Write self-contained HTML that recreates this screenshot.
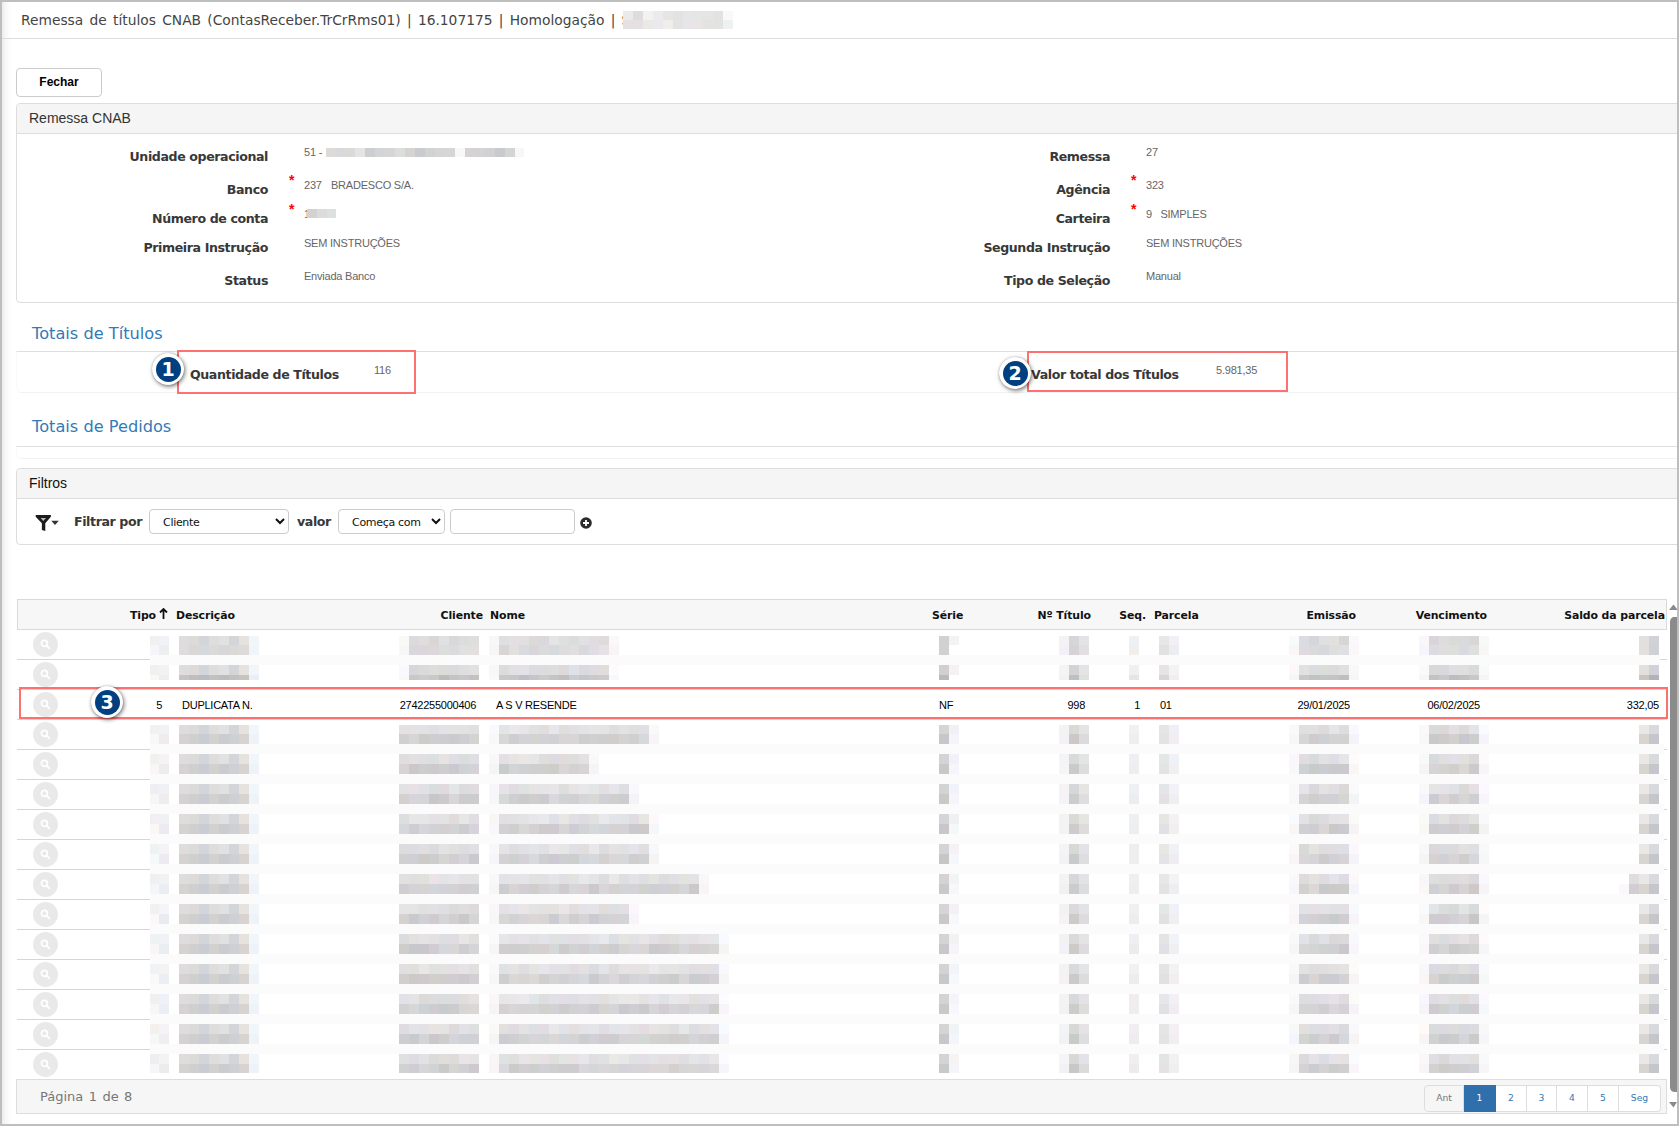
<!DOCTYPE html><html lang="pt-BR"><head><meta charset="utf-8"><title>Remessa de títulos CNAB</title><style>
*{box-sizing:border-box;}
html,body{margin:0;padding:0;}
body{width:1679px;height:1126px;overflow:hidden;background:#fff;position:relative;font-family:"Liberation Sans",sans-serif;color:#333;}
.abs{position:absolute;white-space:nowrap;}
.v{font-family:"DejaVu Sans","Liberation Sans",sans-serif;}
.a{font-family:"Liberation Sans",sans-serif;}
#frame{position:absolute;left:0;top:0;width:1679px;height:1126px;border:2px solid #bebebe;z-index:50;pointer-events:none;}
#lshade{position:absolute;left:2px;top:2px;width:9px;height:1122px;background:linear-gradient(90deg,#ececec 0,#f6f6f6 3px,#fff 9px);z-index:0;}
#titlebar{position:absolute;left:0;top:2px;width:1679px;height:37px;border-bottom:1px solid #dcdcdc;}
#title{position:absolute;left:21px;top:8px;height:20px;line-height:20px;font-size:13.8px;word-spacing:1.9px;color:#444;white-space:nowrap;}
.btn{position:absolute;left:16px;top:68px;width:86px;height:29px;border:1px solid #ccc;border-radius:4px;background:#fff;font:bold 12px "Liberation Sans",sans-serif;color:#000;text-align:center;line-height:24px;padding:0 0 2px 0;}
.panel{position:absolute;left:16px;width:1700px;border:1px solid #ddd;border-radius:4px;background:#fff;}
.panel .hd{height:30px;background:#f5f5f5;border-bottom:1px solid #ddd;border-radius:3px 3px 0 0;font-size:14px;line-height:28px;padding-left:12px;color:#333;text-indent:0;}
.lbl{position:absolute;white-space:nowrap;font-family:"DejaVu Sans","Liberation Sans",sans-serif;font-weight:bold;font-size:12.6px;letter-spacing:-0.4px;color:#383838;text-align:right;height:18px;line-height:18px;}
.val{position:absolute;white-space:nowrap;font-size:11px;letter-spacing:-0.22px;color:#666;height:14px;line-height:14px;}
.req{position:absolute;color:#f00;font:bold 14px "Liberation Sans",sans-serif;height:14px;line-height:14px;}
.sect{position:absolute;left:32px;font-family:"DejaVu Sans","Liberation Sans",sans-serif;font-size:16.2px;color:#337ab7;height:22px;line-height:22px;white-space:nowrap;}
.fs{position:absolute;left:16px;width:1700px;border-top:1px solid #dfdfdf;border-bottom:1px solid #f2f2f2;border-left:1px solid #fafafa;border-radius:0 0 0 5px;}
.redbox{position:absolute;border:2px solid #fd7171;z-index:5;}
.badge{position:absolute;width:32px;height:32px;border-radius:50%;background:#fff;box-shadow:1px 1.5px 4px rgba(0,0,0,.55),0 0 1px rgba(0,0,0,.35);z-index:6;}
.badge b{position:absolute;left:3.5px;top:3.5px;width:25px;height:25px;border-radius:50%;background:#004080;color:#fff;font:bold 19px "DejaVu Sans",sans-serif;line-height:25px;text-align:center;}
.sel{position:absolute;height:25px;-webkit-appearance:none;appearance:none;outline:none;margin:0;border:1px solid #ccc;border-radius:4px;background:#fff;font-family:"DejaVu Sans","Liberation Sans",sans-serif;font-size:11px;letter-spacing:-0.3px;color:#111;line-height:25px;white-space:nowrap;}
.th{position:absolute;top:1px;height:29px;line-height:29px;font-family:"DejaVu Sans","Liberation Sans",sans-serif;font-weight:bold;font-size:10.9px;letter-spacing:-0.1px;color:#111;white-space:nowrap;}
.td{position:absolute;font-size:11px;letter-spacing:-0.25px;color:#000;height:14px;line-height:14px;white-space:nowrap;}
.rowline{position:absolute;left:17px;width:1650px;height:1px;background:#d6d6d6;}
.mag{position:absolute;left:33px;width:25px;height:25px;border-radius:50%;background:#e9e9e9;}
.mag svg{position:absolute;left:7px;top:7px;}
.pg{position:absolute;top:0;height:27px;line-height:23px;border:1px solid #ddd;border-left:none;text-align:center;font-family:"DejaVu Sans","Liberation Sans",sans-serif;font-size:9.2px;color:#337ab7;background:#fff;}
</style></head><body>
<div id="lshade"></div>
<div id="titlebar"><div id="title" class="v">Remessa de títulos CNAB (ContasReceber.TrCrRms01) | 16.107175 | Homologação | S</div></div>
<button class="btn" type="button">Fechar</button>
<div class="panel" style="top:103px;height:200px;"><div class="hd">Remessa CNAB</div></div>
<div class="lbl" style="left:-32px;width:300px;top:148px;">Unidade operacional</div>
<div class="val" style="left:304px;top:145px;">51 - </div>
<div class="lbl" style="left:-32px;width:300px;top:181px;">Banco</div>
<div class="val" style="left:304px;top:178px;">237 &nbsp;<span style="margin-left:0.8px"> BRADESCO S/A.</span></div>
<div class="lbl" style="left:-32px;width:300px;top:210px;">Número de conta</div>
<div class="val" style="left:304px;top:207px;">1</div>
<div class="lbl" style="left:-32px;width:300px;top:239px;">Primeira Instrução</div>
<div class="val" style="left:304px;top:236px;">SEM INSTRUÇÕES</div>
<div class="lbl" style="left:-32px;width:300px;top:272px;">Status</div>
<div class="val" style="left:304px;top:269px;">Enviada Banco</div>
<div class="lbl" style="left:810px;width:300px;top:148px;">Remessa</div>
<div class="val" style="left:1146px;top:145px;">27</div>
<div class="lbl" style="left:810px;width:300px;top:181px;">Agência</div>
<div class="val" style="left:1146px;top:178px;">323</div>
<div class="lbl" style="left:810px;width:300px;top:210px;">Carteira</div>
<div class="val" style="left:1146px;top:207px;">9 &nbsp; SIMPLES</div>
<div class="lbl" style="left:810px;width:300px;top:239px;">Segunda Instrução</div>
<div class="val" style="left:1146px;top:236px;">SEM INSTRUÇÕES</div>
<div class="lbl" style="left:810px;width:300px;top:272px;">Tipo de Seleção</div>
<div class="val" style="left:1146px;top:269px;">Manual</div>
<div class="req" style="left:289px;top:173px;">*</div>
<div class="req" style="left:289px;top:202px;">*</div>
<div class="req" style="left:1131px;top:173px;">*</div>
<div class="req" style="left:1131px;top:202px;">*</div>
<div class="sect" style="top:323px;">Totais de Títulos</div>
<div class="fs" style="top:351px;height:42px;"></div>
<div class="lbl" style="left:190px;top:366px;text-align:left;">Quantidade de Títulos</div>
<div class="val" style="left:374px;top:363px;">116</div>
<div class="lbl" style="left:1031px;top:366px;text-align:left;">Valor total dos Títulos</div>
<div class="val" style="left:1216px;top:363px;">5.981,35</div>
<div class="redbox" style="left:177px;top:350px;width:239px;height:44px;"></div>
<div class="redbox" style="left:1027px;top:351px;width:261px;height:41px;"></div>
<div class="badge" style="left:152px;top:353px;"><b>1</b></div>
<div class="badge" style="left:999px;top:357px;"><b>2</b></div>
<div class="sect" style="top:416px;">Totais de Pedidos</div>
<div class="fs" style="top:446px;height:13px;"></div>
<div class="panel" style="top:468px;height:77px;"><div class="hd" style="color:#111;">Filtros</div></div>
<svg class="abs" style="left:35px;top:514px;" width="26" height="18" viewBox="0 0 26 18"><path d="M0.7 1.1H15.9V2.8L10.3 9.2V17L6.9 16V9.2L0.7 2.8Z" fill="#1c1c1c"/><path d="M5.6 4.1H11L8.3 7Z" fill="#b9b9b9"/><path d="M16.3 6.8H23.8L20 10.9Z" fill="#333"/></svg>
<div class="lbl" style="left:74px;top:513px;text-align:left;">Filtrar por</div>
<select class="sel" style="left:149px;top:509px;width:140px;padding:0 0 0 13px;"><option selected>Cliente</option><option>Nome</option><option>Nº Título</option></select>
<svg class="abs" style="left:275px;top:518px;" width="10" height="7" viewBox="0 0 10 7"><path d="M1 1l4 4 4-4" fill="none" stroke="#111" stroke-width="2"/></svg>
<div class="lbl" style="left:297px;top:513px;text-align:left;">valor</div>
<select class="sel" style="left:338px;top:509px;width:107px;padding:0 0 0 13px;"><option selected>Começa com</option><option>Contém</option><option>Igual a</option></select>
<svg class="abs" style="left:431px;top:518px;" width="10" height="7" viewBox="0 0 10 7"><path d="M1 1l4 4 4-4" fill="none" stroke="#111" stroke-width="2"/></svg>
<input class="sel" type="text" style="left:450px;top:509px;width:125px;" value="">
<svg class="abs" style="left:580px;top:517px;" width="12" height="12" viewBox="0 0 12 12"><circle cx="6" cy="6" r="5.8" fill="#2b2b2b"/><path d="M6 3v6M3 6h6" stroke="#fff" stroke-width="1.8"/></svg>
<div class="abs" role="row" style="left:17px;top:599px;width:1650px;height:31px;background:#f7f7f7;border:1px solid #d9d9d9;">
<div class="th" role="columnheader" style="right:1510px;">Tipo</div>
<svg class="abs" style="left:141px;top:8px;" width="9" height="12" viewBox="0 0 9 12"><path d="M4.5 1v10M1 4.5L4.5 1 8 4.5" fill="none" stroke="#111" stroke-width="1.8"/></svg>
<div class="th" role="columnheader" style="left:158px;">Descrição</div>
<div class="th" role="columnheader" style="right:1183px;">Cliente</div>
<div class="th" role="columnheader" style="left:472px;">Nome</div>
<div class="th" role="columnheader" style="left:914px;">Série</div>
<div class="th" role="columnheader" style="right:575px;">Nº Título</div>
<div class="th" role="columnheader" style="right:520px;">Seq.</div>
<div class="th" role="columnheader" style="left:1136px;">Parcela</div>
<div class="th" role="columnheader" style="right:310px;">Emissão</div>
<div class="th" role="columnheader" style="right:179px;">Vencimento</div>
<div class="th" role="columnheader" style="right:1px;">Saldo da parcela</div>
</div>
<div class="mag" style="top:632px;"><svg width="11" height="11" viewBox="0 0 11 11"><circle cx="4.4" cy="4.4" r="3" fill="none" stroke="#fff" stroke-width="1.7"/><path d="M6.7 6.7l2.7 2.7" stroke="#fff" stroke-width="1.9" stroke-linecap="round"/></svg></div>
<div class="rowline" style="top:659px;"></div>
<div class="mag" style="top:662px;"><svg width="11" height="11" viewBox="0 0 11 11"><circle cx="4.4" cy="4.4" r="3" fill="none" stroke="#fff" stroke-width="1.7"/><path d="M6.7 6.7l2.7 2.7" stroke="#fff" stroke-width="1.9" stroke-linecap="round"/></svg></div>
<div class="rowline" style="top:689px;"></div>
<div class="mag" style="top:692px;"><svg width="11" height="11" viewBox="0 0 11 11"><circle cx="4.4" cy="4.4" r="3" fill="none" stroke="#fff" stroke-width="1.7"/><path d="M6.7 6.7l2.7 2.7" stroke="#fff" stroke-width="1.9" stroke-linecap="round"/></svg></div>
<div class="rowline" style="top:719px;"></div>
<div class="mag" style="top:722px;"><svg width="11" height="11" viewBox="0 0 11 11"><circle cx="4.4" cy="4.4" r="3" fill="none" stroke="#fff" stroke-width="1.7"/><path d="M6.7 6.7l2.7 2.7" stroke="#fff" stroke-width="1.9" stroke-linecap="round"/></svg></div>
<div class="rowline" style="top:749px;"></div>
<div class="mag" style="top:752px;"><svg width="11" height="11" viewBox="0 0 11 11"><circle cx="4.4" cy="4.4" r="3" fill="none" stroke="#fff" stroke-width="1.7"/><path d="M6.7 6.7l2.7 2.7" stroke="#fff" stroke-width="1.9" stroke-linecap="round"/></svg></div>
<div class="rowline" style="top:779px;"></div>
<div class="mag" style="top:782px;"><svg width="11" height="11" viewBox="0 0 11 11"><circle cx="4.4" cy="4.4" r="3" fill="none" stroke="#fff" stroke-width="1.7"/><path d="M6.7 6.7l2.7 2.7" stroke="#fff" stroke-width="1.9" stroke-linecap="round"/></svg></div>
<div class="rowline" style="top:809px;"></div>
<div class="mag" style="top:812px;"><svg width="11" height="11" viewBox="0 0 11 11"><circle cx="4.4" cy="4.4" r="3" fill="none" stroke="#fff" stroke-width="1.7"/><path d="M6.7 6.7l2.7 2.7" stroke="#fff" stroke-width="1.9" stroke-linecap="round"/></svg></div>
<div class="rowline" style="top:839px;"></div>
<div class="mag" style="top:842px;"><svg width="11" height="11" viewBox="0 0 11 11"><circle cx="4.4" cy="4.4" r="3" fill="none" stroke="#fff" stroke-width="1.7"/><path d="M6.7 6.7l2.7 2.7" stroke="#fff" stroke-width="1.9" stroke-linecap="round"/></svg></div>
<div class="rowline" style="top:869px;"></div>
<div class="mag" style="top:872px;"><svg width="11" height="11" viewBox="0 0 11 11"><circle cx="4.4" cy="4.4" r="3" fill="none" stroke="#fff" stroke-width="1.7"/><path d="M6.7 6.7l2.7 2.7" stroke="#fff" stroke-width="1.9" stroke-linecap="round"/></svg></div>
<div class="rowline" style="top:899px;"></div>
<div class="mag" style="top:902px;"><svg width="11" height="11" viewBox="0 0 11 11"><circle cx="4.4" cy="4.4" r="3" fill="none" stroke="#fff" stroke-width="1.7"/><path d="M6.7 6.7l2.7 2.7" stroke="#fff" stroke-width="1.9" stroke-linecap="round"/></svg></div>
<div class="rowline" style="top:929px;"></div>
<div class="mag" style="top:932px;"><svg width="11" height="11" viewBox="0 0 11 11"><circle cx="4.4" cy="4.4" r="3" fill="none" stroke="#fff" stroke-width="1.7"/><path d="M6.7 6.7l2.7 2.7" stroke="#fff" stroke-width="1.9" stroke-linecap="round"/></svg></div>
<div class="rowline" style="top:959px;"></div>
<div class="mag" style="top:962px;"><svg width="11" height="11" viewBox="0 0 11 11"><circle cx="4.4" cy="4.4" r="3" fill="none" stroke="#fff" stroke-width="1.7"/><path d="M6.7 6.7l2.7 2.7" stroke="#fff" stroke-width="1.9" stroke-linecap="round"/></svg></div>
<div class="rowline" style="top:989px;"></div>
<div class="mag" style="top:992px;"><svg width="11" height="11" viewBox="0 0 11 11"><circle cx="4.4" cy="4.4" r="3" fill="none" stroke="#fff" stroke-width="1.7"/><path d="M6.7 6.7l2.7 2.7" stroke="#fff" stroke-width="1.9" stroke-linecap="round"/></svg></div>
<div class="rowline" style="top:1019px;"></div>
<div class="mag" style="top:1022px;"><svg width="11" height="11" viewBox="0 0 11 11"><circle cx="4.4" cy="4.4" r="3" fill="none" stroke="#fff" stroke-width="1.7"/><path d="M6.7 6.7l2.7 2.7" stroke="#fff" stroke-width="1.9" stroke-linecap="round"/></svg></div>
<div class="rowline" style="top:1049px;"></div>
<div class="mag" style="top:1052px;"><svg width="11" height="11" viewBox="0 0 11 11"><circle cx="4.4" cy="4.4" r="3" fill="none" stroke="#fff" stroke-width="1.7"/><path d="M6.7 6.7l2.7 2.7" stroke="#fff" stroke-width="1.9" stroke-linecap="round"/></svg></div>
<div class="abs" style="left:150px;top:636px;width:1510px;height:44px;background:#fff;"></div>
<div class="abs" style="left:150px;top:724px;width:1514px;height:350px;background:#fff;"></div>
<div class="abs" style="left:150px;top:655px;width:1510px;height:10px;background:#fbfbfb;"></div>
<div class="abs" style="left:150px;top:744px;width:1514px;height:10px;background:#fbfbfb;"></div>
<div class="abs" style="left:150px;top:774px;width:1514px;height:10px;background:#fbfbfb;"></div>
<div class="abs" style="left:150px;top:804px;width:1514px;height:10px;background:#fbfbfb;"></div>
<div class="abs" style="left:150px;top:834px;width:1514px;height:10px;background:#fbfbfb;"></div>
<div class="abs" style="left:150px;top:864px;width:1514px;height:10px;background:#fbfbfb;"></div>
<div class="abs" style="left:150px;top:894px;width:1514px;height:10px;background:#fbfbfb;"></div>
<div class="abs" style="left:150px;top:924px;width:1514px;height:10px;background:#fbfbfb;"></div>
<div class="abs" style="left:150px;top:954px;width:1514px;height:10px;background:#fbfbfb;"></div>
<div class="abs" style="left:150px;top:984px;width:1514px;height:10px;background:#fbfbfb;"></div>
<div class="abs" style="left:150px;top:1014px;width:1514px;height:10px;background:#fbfbfb;"></div>
<div class="abs" style="left:150px;top:1044px;width:1514px;height:10px;background:#fbfbfb;"></div>
<div class="td" role="cell" style="right:1517px;top:698px;">5</div>
<div class="td" role="cell" style="left:182px;top:698px;">DUPLICATA N.</div>
<div class="td" role="cell" style="right:1203px;top:698px;">2742255000406</div>
<div class="td" role="cell" style="left:496px;top:698px;">A S V RESENDE</div>
<div class="td" role="cell" style="left:939px;top:698px;">NF</div>
<div class="td" role="cell" style="right:594px;top:698px;">998</div>
<div class="td" role="cell" style="right:539px;top:698px;">1</div>
<div class="td" role="cell" style="left:1160px;top:698px;">01</div>
<div class="td" role="cell" style="right:329px;top:698px;">29/01/2025</div>
<div class="td" role="cell" style="right:199px;top:698px;">06/02/2025</div>
<div class="td" role="cell" style="right:20px;top:698px;">332,05</div>
<div class="redbox" style="left:19px;top:687px;width:1649px;height:32px;"></div>
<div class="badge" style="left:91px;top:686px;"><b>3</b></div>
<div class="abs" style="left:16px;top:1079px;width:1651px;height:35px;background:#f6f6f6;border:1px solid #ddd;"></div>
<div class="abs v" style="left:40px;top:1088px;font-size:13px;word-spacing:1.3px;color:#777;height:18px;line-height:18px;">Página 1 de 8</div>
<div class="abs" style="left:1424px;top:1085px;width:237px;height:27px;">
<div class="pg" style="left:0px;width:40px;border-left:1px solid #ddd;border-radius:4px 0 0 4px;color:#777;background:#f6f6f6;">Ant</div>
<div class="pg" style="left:40px;width:32px;background:#2f6fab;border-color:#2f6fab;color:#fff;">1</div>
<div class="pg" style="left:72px;width:31px;">2</div>
<div class="pg" style="left:103px;width:30px;">3</div>
<div class="pg" style="left:133px;width:31px;">4</div>
<div class="pg" style="left:164px;width:31px;">5</div>
<div class="pg" style="left:195px;width:42px;border-radius:0 4px 4px 0;">Seg</div>
</div>
<div class="abs" style="left:1668px;top:599px;width:9px;height:520px;background:#fff;"></div>
<svg class="abs" style="left:1669px;top:604px;" width="8" height="6" viewBox="0 0 8 6"><path d="M0 6L4.5 0.5 8 5V6z" fill="#8a8a8a"/></svg>
<div class="abs" style="left:1670px;top:617px;width:7px;height:475px;background:#8b8b8b;border-radius:4px 0 0 4px / 5px 0 0 5px;"></div>
<svg class="abs" style="left:1669px;top:1102px;" width="8" height="6" viewBox="0 0 8 6"><path d="M0 0h8L4.5 5.5z" fill="#8a8a8a"/></svg>
<svg class="abs" style="left:0;top:0;z-index:2;" width="1679" height="1126" viewBox="0 0 1679 1126" shape-rendering="crispEdges"><rect x="623" y="11" width="10" height="9" fill="#eae9eb"/><rect x="623" y="20" width="10" height="9" fill="#e6e1e1"/><rect x="633" y="11" width="10" height="9" fill="#e0dcde"/><rect x="633" y="20" width="10" height="9" fill="#e4e0e4"/><rect x="643" y="11" width="10" height="9" fill="#f3f2f2"/><rect x="643" y="20" width="10" height="9" fill="#e9e9e6"/><rect x="653" y="11" width="10" height="9" fill="#ebeaee"/><rect x="653" y="20" width="10" height="9" fill="#ebe8ee"/><rect x="663" y="11" width="10" height="9" fill="#e8e4e5"/><rect x="663" y="20" width="10" height="9" fill="#efeeea"/><rect x="673" y="11" width="10" height="9" fill="#e2e2e1"/><rect x="673" y="20" width="10" height="9" fill="#e2e3e2"/><rect x="683" y="11" width="10" height="9" fill="#e8e5e6"/><rect x="683" y="20" width="10" height="9" fill="#e7e5e8"/><rect x="693" y="11" width="10" height="9" fill="#e2e6e4"/><rect x="693" y="20" width="10" height="9" fill="#e8e5e4"/><rect x="703" y="11" width="10" height="9" fill="#e5e5e6"/><rect x="703" y="20" width="10" height="9" fill="#e3e4e2"/><rect x="713" y="11" width="10" height="9" fill="#e4e0e4"/><rect x="713" y="20" width="10" height="9" fill="#e1e5e2"/><rect x="723" y="11" width="10" height="9" fill="#f8f9f8"/><rect x="723" y="20" width="10" height="9" fill="#eff0f1"/><rect x="326" y="148" width="9" height="9" fill="#dcdbda"/><rect x="335" y="148" width="10" height="9" fill="#d9d9dc"/><rect x="345" y="148" width="10" height="9" fill="#dcd9d9"/><rect x="355" y="148" width="10" height="9" fill="#e4e4e4"/><rect x="365" y="148" width="10" height="9" fill="#cdced1"/><rect x="375" y="148" width="10" height="9" fill="#d3d4d6"/><rect x="385" y="148" width="10" height="9" fill="#d6d6d7"/><rect x="395" y="148" width="10" height="9" fill="#dcdedd"/><rect x="405" y="148" width="10" height="9" fill="#d6d4d2"/><rect x="415" y="148" width="10" height="9" fill="#cacbcf"/><rect x="425" y="148" width="10" height="9" fill="#d3d2d2"/><rect x="435" y="148" width="10" height="9" fill="#d6d5d5"/><rect x="445" y="148" width="10" height="9" fill="#d5d6d8"/><rect x="455" y="148" width="10" height="9" fill="#f8f8f8"/><rect x="465" y="148" width="10" height="9" fill="#d6d4d3"/><rect x="475" y="148" width="10" height="9" fill="#d3d3d6"/><rect x="485" y="148" width="10" height="9" fill="#d1d1d3"/><rect x="495" y="148" width="10" height="9" fill="#c9cace"/><rect x="505" y="148" width="10" height="9" fill="#d5d4d5"/><rect x="515" y="148" width="9" height="9" fill="#f6f7f9"/><rect x="307" y="209" width="10" height="9" fill="#d2d2d3"/><rect x="317" y="209" width="10" height="9" fill="#dddadb"/><rect x="327" y="209" width="9" height="9" fill="#dbe0e1"/><rect x="150" y="636" width="9" height="9" fill="#f1f0f0"/><rect x="159" y="636" width="10" height="9" fill="#f1f1f8"/><rect x="150" y="645" width="9" height="10" fill="#f6f5f9"/><rect x="159" y="645" width="10" height="10" fill="#eceef0"/><rect x="179" y="636" width="10" height="9" fill="#dedcdc"/><rect x="179" y="645" width="10" height="10" fill="#dedcdc"/><rect x="189" y="636" width="10" height="9" fill="#dddbda"/><rect x="189" y="645" width="10" height="10" fill="#dad8d7"/><rect x="199" y="636" width="10" height="9" fill="#d2d5da"/><rect x="199" y="645" width="10" height="10" fill="#d6d9dc"/><rect x="209" y="636" width="10" height="9" fill="#dedddb"/><rect x="209" y="645" width="10" height="10" fill="#dadada"/><rect x="219" y="636" width="10" height="9" fill="#e0e2e2"/><rect x="219" y="645" width="10" height="10" fill="#d7d7d9"/><rect x="229" y="636" width="10" height="9" fill="#d3d5d9"/><rect x="229" y="645" width="10" height="10" fill="#dbd9d8"/><rect x="239" y="636" width="10" height="9" fill="#e6e2de"/><rect x="239" y="645" width="10" height="10" fill="#dedada"/><rect x="249" y="636" width="10" height="9" fill="#f1f6fb"/><rect x="249" y="645" width="10" height="10" fill="#f0f5fa"/><rect x="399" y="636" width="10" height="9" fill="#f8faf6"/><rect x="399" y="645" width="10" height="10" fill="#f8f7f8"/><rect x="409" y="636" width="10" height="9" fill="#dddadf"/><rect x="409" y="645" width="10" height="10" fill="#d7d7dc"/><rect x="419" y="636" width="10" height="9" fill="#dededd"/><rect x="419" y="645" width="10" height="10" fill="#dbd6dc"/><rect x="429" y="636" width="10" height="9" fill="#dbd6d6"/><rect x="429" y="645" width="10" height="10" fill="#dcd7da"/><rect x="439" y="636" width="10" height="9" fill="#e0e1e3"/><rect x="439" y="645" width="10" height="10" fill="#dbdedd"/><rect x="449" y="636" width="10" height="9" fill="#dad7db"/><rect x="449" y="645" width="10" height="10" fill="#dbdbdd"/><rect x="459" y="636" width="10" height="9" fill="#dbdcde"/><rect x="459" y="645" width="10" height="10" fill="#e2e0df"/><rect x="469" y="636" width="10" height="9" fill="#dfdedd"/><rect x="469" y="645" width="10" height="10" fill="#e3dfdf"/><rect x="489" y="636" width="10" height="9" fill="#f7f7f9"/><rect x="489" y="645" width="10" height="10" fill="#f8f5f6"/><rect x="499" y="636" width="10" height="9" fill="#dedfe0"/><rect x="499" y="645" width="10" height="10" fill="#d9d5d4"/><rect x="509" y="636" width="10" height="9" fill="#e6dfe2"/><rect x="509" y="645" width="10" height="10" fill="#e2dfdf"/><rect x="519" y="636" width="10" height="9" fill="#e0e0e0"/><rect x="519" y="645" width="10" height="10" fill="#d9dadf"/><rect x="529" y="636" width="10" height="9" fill="#ddd9d9"/><rect x="529" y="645" width="10" height="10" fill="#d8d5db"/><rect x="539" y="636" width="10" height="9" fill="#dad8de"/><rect x="539" y="645" width="10" height="10" fill="#dcdbdc"/><rect x="549" y="636" width="10" height="9" fill="#e5e3e4"/><rect x="549" y="645" width="10" height="10" fill="#d7dadd"/><rect x="559" y="636" width="10" height="9" fill="#dedfde"/><rect x="559" y="645" width="10" height="10" fill="#dedcdd"/><rect x="569" y="636" width="10" height="9" fill="#daddde"/><rect x="569" y="645" width="10" height="10" fill="#e0dfde"/><rect x="579" y="636" width="10" height="9" fill="#e1e1e3"/><rect x="579" y="645" width="10" height="10" fill="#d8d9dd"/><rect x="589" y="636" width="10" height="9" fill="#e0dcdf"/><rect x="589" y="645" width="10" height="10" fill="#dfdce4"/><rect x="599" y="636" width="10" height="9" fill="#dfdbdb"/><rect x="599" y="645" width="10" height="10" fill="#e5e2e5"/><rect x="609" y="636" width="10" height="9" fill="#faf9f8"/><rect x="609" y="645" width="10" height="10" fill="#f9f5f6"/><rect x="939" y="636" width="10" height="9" fill="#d3d0d0"/><rect x="939" y="645" width="10" height="10" fill="#d0d1d0"/><rect x="949" y="636" width="10" height="9" fill="#f1f3f4"/><rect x="1059" y="636" width="10" height="9" fill="#f3f2f4"/><rect x="1069" y="636" width="10" height="9" fill="#d6d6d8"/><rect x="1079" y="636" width="10" height="9" fill="#e2e5e7"/><rect x="1059" y="645" width="10" height="10" fill="#f3f1f7"/><rect x="1069" y="645" width="10" height="10" fill="#d7d2d5"/><rect x="1079" y="645" width="10" height="10" fill="#e3dfe1"/><rect x="1129" y="636" width="10" height="9" fill="#eef0f3"/><rect x="1129" y="645" width="10" height="10" fill="#f1eeec"/><rect x="1159" y="636" width="10" height="9" fill="#e8e6e6"/><rect x="1169" y="636" width="10" height="9" fill="#f2eff7"/><rect x="1159" y="645" width="10" height="10" fill="#e1e1e1"/><rect x="1169" y="645" width="10" height="10" fill="#ecedf0"/><rect x="1289" y="636" width="10" height="9" fill="#f9fafc"/><rect x="1289" y="645" width="10" height="10" fill="#f9f6f5"/><rect x="1299" y="636" width="10" height="9" fill="#dbdbe4"/><rect x="1299" y="645" width="10" height="10" fill="#e0d9dd"/><rect x="1309" y="636" width="10" height="9" fill="#d6d5da"/><rect x="1309" y="645" width="10" height="10" fill="#d9dbdb"/><rect x="1319" y="636" width="10" height="9" fill="#e0dfe2"/><rect x="1319" y="645" width="10" height="10" fill="#d6d8dc"/><rect x="1329" y="636" width="10" height="9" fill="#e2e1de"/><rect x="1329" y="645" width="10" height="10" fill="#dddede"/><rect x="1339" y="636" width="10" height="9" fill="#d4d7d3"/><rect x="1339" y="645" width="10" height="10" fill="#dfdfe4"/><rect x="1349" y="636" width="10" height="9" fill="#fbf7fc"/><rect x="1349" y="645" width="10" height="10" fill="#f9f7f7"/><rect x="1419" y="636" width="10" height="9" fill="#faf6fa"/><rect x="1419" y="645" width="10" height="10" fill="#f6f4fd"/><rect x="1429" y="636" width="10" height="9" fill="#d8d4da"/><rect x="1429" y="645" width="10" height="10" fill="#dcdbe0"/><rect x="1439" y="636" width="10" height="9" fill="#deddde"/><rect x="1439" y="645" width="10" height="10" fill="#e0ddde"/><rect x="1449" y="636" width="10" height="9" fill="#dadad7"/><rect x="1449" y="645" width="10" height="10" fill="#dddfdc"/><rect x="1459" y="636" width="10" height="9" fill="#d9dadc"/><rect x="1459" y="645" width="10" height="10" fill="#d9dae1"/><rect x="1469" y="636" width="10" height="9" fill="#d9d6d8"/><rect x="1469" y="645" width="10" height="10" fill="#dee0de"/><rect x="1479" y="636" width="10" height="9" fill="#f8f8f8"/><rect x="1479" y="645" width="10" height="10" fill="#f8f7f6"/><rect x="1639" y="636" width="10" height="9" fill="#e3dfdd"/><rect x="1649" y="636" width="10" height="9" fill="#d1d2d7"/><rect x="1639" y="645" width="10" height="10" fill="#e2dfdd"/><rect x="1649" y="645" width="10" height="10" fill="#d0d1d6"/><rect x="150" y="665" width="9" height="10" fill="#f0f1ef"/><rect x="159" y="665" width="10" height="10" fill="#f2f2f3"/><rect x="150" y="675" width="9" height="5" fill="#faf7f5"/><rect x="159" y="675" width="10" height="5" fill="#eceef0"/><rect x="179" y="665" width="10" height="10" fill="#dedcdc"/><rect x="179" y="675" width="10" height="5" fill="#c9c4c3"/><rect x="189" y="665" width="10" height="10" fill="#dddbda"/><rect x="189" y="675" width="10" height="5" fill="#c0bdbb"/><rect x="199" y="665" width="10" height="10" fill="#d2d5da"/><rect x="199" y="675" width="10" height="5" fill="#b9bcc3"/><rect x="209" y="665" width="10" height="10" fill="#dedddb"/><rect x="209" y="675" width="10" height="5" fill="#c2c1c0"/><rect x="219" y="665" width="10" height="10" fill="#e0e2e2"/><rect x="219" y="675" width="10" height="5" fill="#bbbdc1"/><rect x="229" y="665" width="10" height="10" fill="#d3d5d9"/><rect x="229" y="675" width="10" height="5" fill="#c2c1be"/><rect x="239" y="665" width="10" height="10" fill="#e6e2de"/><rect x="239" y="675" width="10" height="5" fill="#c8c3c1"/><rect x="249" y="665" width="10" height="10" fill="#f1f6fb"/><rect x="249" y="675" width="10" height="5" fill="#e9eff8"/><rect x="399" y="665" width="10" height="10" fill="#f9f8fd"/><rect x="399" y="675" width="10" height="5" fill="#f8f8f4"/><rect x="409" y="665" width="10" height="10" fill="#d6d6db"/><rect x="409" y="675" width="10" height="5" fill="#c7c8c9"/><rect x="419" y="665" width="10" height="10" fill="#dcd9da"/><rect x="419" y="675" width="10" height="5" fill="#cccccf"/><rect x="429" y="665" width="10" height="10" fill="#dcdedc"/><rect x="429" y="675" width="10" height="5" fill="#c9c9c6"/><rect x="439" y="665" width="10" height="10" fill="#dbdbd9"/><rect x="439" y="675" width="10" height="5" fill="#bebbbd"/><rect x="449" y="665" width="10" height="10" fill="#d8dadc"/><rect x="449" y="675" width="10" height="5" fill="#c6c3c2"/><rect x="459" y="665" width="10" height="10" fill="#dddee2"/><rect x="459" y="675" width="10" height="5" fill="#c7c7cb"/><rect x="469" y="665" width="10" height="10" fill="#e2e1e2"/><rect x="469" y="675" width="10" height="5" fill="#c6c0c1"/><rect x="489" y="665" width="10" height="10" fill="#f8f6f9"/><rect x="489" y="675" width="10" height="5" fill="#f9f8fb"/><rect x="499" y="665" width="10" height="10" fill="#dbddda"/><rect x="499" y="675" width="10" height="5" fill="#ccc8ca"/><rect x="509" y="665" width="10" height="10" fill="#e2e0e3"/><rect x="509" y="675" width="10" height="5" fill="#c6c7c9"/><rect x="519" y="665" width="10" height="10" fill="#e3e1e7"/><rect x="519" y="675" width="10" height="5" fill="#bfbfc7"/><rect x="529" y="665" width="10" height="10" fill="#dbdbe3"/><rect x="529" y="675" width="10" height="5" fill="#c7c5c7"/><rect x="539" y="665" width="10" height="10" fill="#dadddb"/><rect x="539" y="675" width="10" height="5" fill="#cacbcb"/><rect x="549" y="665" width="10" height="10" fill="#dfdddc"/><rect x="549" y="675" width="10" height="5" fill="#c4c3c7"/><rect x="559" y="665" width="10" height="10" fill="#dcd9dc"/><rect x="559" y="675" width="10" height="5" fill="#c1bebe"/><rect x="569" y="665" width="10" height="10" fill="#dfe1e8"/><rect x="569" y="675" width="10" height="5" fill="#caccd0"/><rect x="579" y="665" width="10" height="10" fill="#d9d9df"/><rect x="579" y="675" width="10" height="5" fill="#c3c7ca"/><rect x="589" y="665" width="10" height="10" fill="#dfdcdf"/><rect x="589" y="675" width="10" height="5" fill="#cccac8"/><rect x="599" y="665" width="10" height="10" fill="#e2dcdb"/><rect x="599" y="675" width="10" height="5" fill="#cecbcd"/><rect x="609" y="665" width="10" height="10" fill="#fdfbfd"/><rect x="609" y="675" width="10" height="5" fill="#f8f7fc"/><rect x="939" y="665" width="10" height="10" fill="#d3cfce"/><rect x="939" y="675" width="10" height="5" fill="#bababb"/><rect x="949" y="665" width="10" height="10" fill="#f5f2f3"/><rect x="1059" y="665" width="10" height="10" fill="#f4f4f5"/><rect x="1069" y="665" width="10" height="10" fill="#d2d2d7"/><rect x="1079" y="665" width="10" height="10" fill="#e6e3e5"/><rect x="1059" y="675" width="10" height="5" fill="#f3f1f4"/><rect x="1069" y="675" width="10" height="5" fill="#bcc0c0"/><rect x="1079" y="675" width="10" height="5" fill="#dee2de"/><rect x="1129" y="665" width="10" height="10" fill="#f2f0ef"/><rect x="1129" y="675" width="10" height="5" fill="#e4e6e5"/><rect x="1159" y="665" width="10" height="10" fill="#e8e4e4"/><rect x="1169" y="665" width="10" height="10" fill="#f4f2f5"/><rect x="1159" y="675" width="10" height="5" fill="#d9d6d9"/><rect x="1169" y="675" width="10" height="5" fill="#f1eef2"/><rect x="1289" y="665" width="10" height="10" fill="#fdf7f6"/><rect x="1289" y="675" width="10" height="5" fill="#f7f6f6"/><rect x="1299" y="665" width="10" height="10" fill="#e1e1e1"/><rect x="1299" y="675" width="10" height="5" fill="#c6c9c9"/><rect x="1309" y="665" width="10" height="10" fill="#dcdbdf"/><rect x="1309" y="675" width="10" height="5" fill="#c1c3c1"/><rect x="1319" y="665" width="10" height="10" fill="#dadedb"/><rect x="1319" y="675" width="10" height="5" fill="#c2c5c2"/><rect x="1329" y="665" width="10" height="10" fill="#dbdadc"/><rect x="1329" y="675" width="10" height="5" fill="#c3c3c2"/><rect x="1339" y="665" width="10" height="10" fill="#e1e0e1"/><rect x="1339" y="675" width="10" height="5" fill="#bdc0c2"/><rect x="1349" y="665" width="10" height="10" fill="#f7f9f8"/><rect x="1349" y="675" width="10" height="5" fill="#f6f6f3"/><rect x="1419" y="665" width="10" height="10" fill="#fbf9f9"/><rect x="1419" y="675" width="10" height="5" fill="#f9f5f7"/><rect x="1429" y="665" width="10" height="10" fill="#d8dad8"/><rect x="1429" y="675" width="10" height="5" fill="#c3c4c1"/><rect x="1439" y="665" width="10" height="10" fill="#dbd8db"/><rect x="1439" y="675" width="10" height="5" fill="#c6c9c9"/><rect x="1449" y="665" width="10" height="10" fill="#dfdee2"/><rect x="1449" y="675" width="10" height="5" fill="#bebcbf"/><rect x="1459" y="665" width="10" height="10" fill="#e0dedf"/><rect x="1459" y="675" width="10" height="5" fill="#c3c1c0"/><rect x="1469" y="665" width="10" height="10" fill="#d8dbdc"/><rect x="1469" y="675" width="10" height="5" fill="#cac7c7"/><rect x="1479" y="665" width="10" height="10" fill="#faf9fa"/><rect x="1479" y="675" width="10" height="5" fill="#f7f4f7"/><rect x="1639" y="665" width="10" height="10" fill="#e3dfdd"/><rect x="1649" y="665" width="10" height="10" fill="#d1d2d7"/><rect x="1639" y="675" width="10" height="5" fill="#c9c5c1"/><rect x="1649" y="675" width="10" height="5" fill="#b2b3b8"/><rect x="150" y="725" width="9" height="9" fill="#f1f1f0"/><rect x="159" y="725" width="10" height="9" fill="#f2f2f5"/><rect x="150" y="734" width="9" height="10" fill="#faf7f8"/><rect x="159" y="734" width="10" height="10" fill="#efebef"/><rect x="179" y="725" width="10" height="9" fill="#dedcdc"/><rect x="179" y="734" width="10" height="10" fill="#d6d2d1"/><rect x="189" y="725" width="10" height="9" fill="#dddbda"/><rect x="189" y="734" width="10" height="10" fill="#cfcfd0"/><rect x="199" y="725" width="10" height="9" fill="#d2d5da"/><rect x="199" y="734" width="10" height="10" fill="#c9ccd2"/><rect x="209" y="725" width="10" height="9" fill="#dedddb"/><rect x="209" y="734" width="10" height="10" fill="#d2d1d0"/><rect x="219" y="725" width="10" height="9" fill="#e0e2e2"/><rect x="219" y="734" width="10" height="10" fill="#cbcccf"/><rect x="229" y="725" width="10" height="9" fill="#d3d5d9"/><rect x="229" y="734" width="10" height="10" fill="#cfd0d3"/><rect x="239" y="725" width="10" height="9" fill="#e6e2de"/><rect x="239" y="734" width="10" height="10" fill="#d8d3d0"/><rect x="249" y="725" width="10" height="9" fill="#f1f6fb"/><rect x="249" y="734" width="10" height="10" fill="#eef3f9"/><rect x="399" y="725" width="10" height="9" fill="#e5e0e1"/><rect x="399" y="734" width="10" height="10" fill="#d2cfd0"/><rect x="409" y="725" width="10" height="9" fill="#e5e2e4"/><rect x="409" y="734" width="10" height="10" fill="#d6d6d4"/><rect x="419" y="725" width="10" height="9" fill="#e1e2e6"/><rect x="419" y="734" width="10" height="10" fill="#cccccb"/><rect x="429" y="725" width="10" height="9" fill="#e1dee3"/><rect x="429" y="734" width="10" height="10" fill="#ceced0"/><rect x="439" y="725" width="10" height="9" fill="#e3e3e7"/><rect x="439" y="734" width="10" height="10" fill="#cdccd1"/><rect x="449" y="725" width="10" height="9" fill="#e4e2e3"/><rect x="449" y="734" width="10" height="10" fill="#c9cbcd"/><rect x="459" y="725" width="10" height="9" fill="#e4e2e1"/><rect x="459" y="734" width="10" height="10" fill="#cecdd3"/><rect x="469" y="725" width="10" height="9" fill="#e0e0e3"/><rect x="469" y="734" width="10" height="10" fill="#d5d3d1"/><rect x="489" y="725" width="10" height="9" fill="#f7fafe"/><rect x="489" y="734" width="10" height="10" fill="#f9f7f7"/><rect x="499" y="725" width="10" height="9" fill="#e3e4e7"/><rect x="499" y="734" width="10" height="10" fill="#d7d7d6"/><rect x="509" y="725" width="10" height="9" fill="#ece8ea"/><rect x="509" y="734" width="10" height="10" fill="#cdcdd2"/><rect x="519" y="725" width="10" height="9" fill="#e6e5e7"/><rect x="519" y="734" width="10" height="10" fill="#d4d2d6"/><rect x="529" y="725" width="10" height="9" fill="#e1e0e2"/><rect x="529" y="734" width="10" height="10" fill="#d3d4d1"/><rect x="539" y="725" width="10" height="9" fill="#e2dddb"/><rect x="539" y="734" width="10" height="10" fill="#d0d2d7"/><rect x="549" y="725" width="10" height="9" fill="#e7e6ed"/><rect x="549" y="734" width="10" height="10" fill="#d1d0d2"/><rect x="559" y="725" width="10" height="9" fill="#e0dedd"/><rect x="559" y="734" width="10" height="10" fill="#d9d5d4"/><rect x="569" y="725" width="10" height="9" fill="#e1e0e2"/><rect x="569" y="734" width="10" height="10" fill="#d6d5d8"/><rect x="579" y="725" width="10" height="9" fill="#e4e2e6"/><rect x="579" y="734" width="10" height="10" fill="#d0cdcd"/><rect x="589" y="725" width="10" height="9" fill="#e4e6e3"/><rect x="589" y="734" width="10" height="10" fill="#cfd0cf"/><rect x="599" y="725" width="10" height="9" fill="#e4e4e5"/><rect x="599" y="734" width="10" height="10" fill="#cecdd0"/><rect x="609" y="725" width="10" height="9" fill="#dedde0"/><rect x="609" y="734" width="10" height="10" fill="#d0cdca"/><rect x="619" y="725" width="10" height="9" fill="#e4e1e1"/><rect x="619" y="734" width="10" height="10" fill="#d4d3d3"/><rect x="629" y="725" width="10" height="9" fill="#dedfdf"/><rect x="629" y="734" width="10" height="10" fill="#d0d0cf"/><rect x="639" y="725" width="10" height="9" fill="#dfdfe4"/><rect x="639" y="734" width="10" height="10" fill="#d7d8da"/><rect x="649" y="725" width="10" height="9" fill="#f9faf7"/><rect x="649" y="734" width="10" height="10" fill="#f8f4f9"/><rect x="939" y="725" width="10" height="9" fill="#d7d5d2"/><rect x="939" y="734" width="10" height="10" fill="#c9c6c9"/><rect x="949" y="725" width="10" height="9" fill="#f0f0f5"/><rect x="949" y="734" width="10" height="10" fill="#f5f4fb"/><rect x="1059" y="725" width="10" height="9" fill="#f3f3f3"/><rect x="1069" y="725" width="10" height="9" fill="#d8dad6"/><rect x="1079" y="725" width="10" height="9" fill="#e4e4e4"/><rect x="1059" y="734" width="10" height="10" fill="#f3f1f6"/><rect x="1069" y="734" width="10" height="10" fill="#ccc8c8"/><rect x="1079" y="734" width="10" height="10" fill="#dbdadd"/><rect x="1129" y="725" width="10" height="9" fill="#f2f0f3"/><rect x="1129" y="734" width="10" height="10" fill="#efeeef"/><rect x="1159" y="725" width="10" height="9" fill="#e6e4e6"/><rect x="1169" y="725" width="10" height="9" fill="#f0eff8"/><rect x="1159" y="734" width="10" height="10" fill="#e5e2e6"/><rect x="1169" y="734" width="10" height="10" fill="#f1edf0"/><rect x="1289" y="725" width="10" height="9" fill="#f9f8fc"/><rect x="1289" y="734" width="10" height="10" fill="#f6f8f5"/><rect x="1299" y="725" width="10" height="9" fill="#dee0e0"/><rect x="1299" y="734" width="10" height="10" fill="#d5d6d7"/><rect x="1309" y="725" width="10" height="9" fill="#e2dfe2"/><rect x="1309" y="734" width="10" height="10" fill="#d0cccd"/><rect x="1319" y="725" width="10" height="9" fill="#dddbd9"/><rect x="1319" y="734" width="10" height="10" fill="#ced0d3"/><rect x="1329" y="725" width="10" height="9" fill="#e5e4e9"/><rect x="1329" y="734" width="10" height="10" fill="#d3d3d3"/><rect x="1339" y="725" width="10" height="9" fill="#dddde0"/><rect x="1339" y="734" width="10" height="10" fill="#d1d3d1"/><rect x="1349" y="725" width="10" height="9" fill="#f8f9fe"/><rect x="1349" y="734" width="10" height="10" fill="#f5f3f9"/><rect x="1419" y="725" width="10" height="9" fill="#fcf7fb"/><rect x="1419" y="734" width="10" height="10" fill="#f9f7f7"/><rect x="1429" y="725" width="10" height="9" fill="#d9dbda"/><rect x="1429" y="734" width="10" height="10" fill="#c9c8ca"/><rect x="1439" y="725" width="10" height="9" fill="#ddd8d7"/><rect x="1439" y="734" width="10" height="10" fill="#cecbcd"/><rect x="1449" y="725" width="10" height="9" fill="#e2e0e5"/><rect x="1449" y="734" width="10" height="10" fill="#d2cfcd"/><rect x="1459" y="725" width="10" height="9" fill="#dcdbda"/><rect x="1459" y="734" width="10" height="10" fill="#c9c7ce"/><rect x="1469" y="725" width="10" height="9" fill="#e3e4e9"/><rect x="1469" y="734" width="10" height="10" fill="#cbcecc"/><rect x="1479" y="725" width="10" height="9" fill="#fafbfd"/><rect x="1479" y="734" width="10" height="10" fill="#f6f3fc"/><rect x="1639" y="725" width="10" height="9" fill="#e9e8e6"/><rect x="1649" y="725" width="10" height="9" fill="#d9dadd"/><rect x="1639" y="734" width="10" height="10" fill="#d8d4d0"/><rect x="1649" y="734" width="10" height="10" fill="#c5c6cb"/><rect x="150" y="754" width="9" height="10" fill="#f1f2ef"/><rect x="159" y="754" width="10" height="10" fill="#f5f4f3"/><rect x="150" y="764" width="9" height="10" fill="#faf6f8"/><rect x="159" y="764" width="10" height="10" fill="#efecf0"/><rect x="179" y="754" width="10" height="10" fill="#dedcdc"/><rect x="179" y="764" width="10" height="10" fill="#d6d2d1"/><rect x="189" y="754" width="10" height="10" fill="#dddbda"/><rect x="189" y="764" width="10" height="10" fill="#cfcfd0"/><rect x="199" y="754" width="10" height="10" fill="#d2d5da"/><rect x="199" y="764" width="10" height="10" fill="#c9ccd2"/><rect x="209" y="754" width="10" height="10" fill="#dedddb"/><rect x="209" y="764" width="10" height="10" fill="#d2d1d0"/><rect x="219" y="754" width="10" height="10" fill="#e0e2e2"/><rect x="219" y="764" width="10" height="10" fill="#cbcccf"/><rect x="229" y="754" width="10" height="10" fill="#d3d5d9"/><rect x="229" y="764" width="10" height="10" fill="#cfd0d3"/><rect x="239" y="754" width="10" height="10" fill="#e6e2de"/><rect x="239" y="764" width="10" height="10" fill="#d8d3d0"/><rect x="249" y="754" width="10" height="10" fill="#f1f6fb"/><rect x="249" y="764" width="10" height="10" fill="#eef3f9"/><rect x="399" y="754" width="10" height="10" fill="#e0dddf"/><rect x="399" y="764" width="10" height="10" fill="#d7d3d4"/><rect x="409" y="754" width="10" height="10" fill="#e4e0e2"/><rect x="409" y="764" width="10" height="10" fill="#ccc8c7"/><rect x="419" y="754" width="10" height="10" fill="#dfdfe2"/><rect x="419" y="764" width="10" height="10" fill="#cdcccf"/><rect x="429" y="754" width="10" height="10" fill="#dbdfdf"/><rect x="429" y="764" width="10" height="10" fill="#cec9cd"/><rect x="439" y="754" width="10" height="10" fill="#e8e3e3"/><rect x="439" y="764" width="10" height="10" fill="#cecdd0"/><rect x="449" y="754" width="10" height="10" fill="#dedee4"/><rect x="449" y="764" width="10" height="10" fill="#cac9d1"/><rect x="459" y="754" width="10" height="10" fill="#d9ddde"/><rect x="459" y="764" width="10" height="10" fill="#ced2d3"/><rect x="469" y="754" width="10" height="10" fill="#dfdee2"/><rect x="469" y="764" width="10" height="10" fill="#d4d2d8"/><rect x="489" y="754" width="10" height="10" fill="#faf7f9"/><rect x="489" y="764" width="10" height="10" fill="#f4f5f5"/><rect x="499" y="754" width="10" height="10" fill="#e5dee3"/><rect x="499" y="764" width="10" height="10" fill="#c9cccd"/><rect x="509" y="754" width="10" height="10" fill="#e6e5e4"/><rect x="509" y="764" width="10" height="10" fill="#d4d4d4"/><rect x="519" y="754" width="10" height="10" fill="#e9e8e6"/><rect x="519" y="764" width="10" height="10" fill="#ced2d4"/><rect x="529" y="754" width="10" height="10" fill="#e6e5e8"/><rect x="529" y="764" width="10" height="10" fill="#cfcfcf"/><rect x="539" y="754" width="10" height="10" fill="#dfdedc"/><rect x="539" y="764" width="10" height="10" fill="#cfcfd0"/><rect x="549" y="754" width="10" height="10" fill="#dedbe0"/><rect x="549" y="764" width="10" height="10" fill="#cecdc9"/><rect x="559" y="754" width="10" height="10" fill="#e0dcdb"/><rect x="559" y="764" width="10" height="10" fill="#d9d5d9"/><rect x="569" y="754" width="10" height="10" fill="#dededd"/><rect x="569" y="764" width="10" height="10" fill="#d4d2d1"/><rect x="579" y="754" width="10" height="10" fill="#e3e1e2"/><rect x="579" y="764" width="10" height="10" fill="#d7d3d6"/><rect x="589" y="754" width="10" height="10" fill="#faf9f9"/><rect x="589" y="764" width="10" height="10" fill="#f4f4f9"/><rect x="939" y="754" width="10" height="10" fill="#d3d4d7"/><rect x="939" y="764" width="10" height="10" fill="#c8c9c7"/><rect x="949" y="754" width="10" height="10" fill="#f2f0f9"/><rect x="949" y="764" width="10" height="10" fill="#f8f4fc"/><rect x="1059" y="754" width="10" height="10" fill="#f3f4f5"/><rect x="1069" y="754" width="10" height="10" fill="#dadadb"/><rect x="1079" y="754" width="10" height="10" fill="#e2e4e6"/><rect x="1059" y="764" width="10" height="10" fill="#f6f4f6"/><rect x="1069" y="764" width="10" height="10" fill="#cacacb"/><rect x="1079" y="764" width="10" height="10" fill="#dcdedb"/><rect x="1129" y="754" width="10" height="10" fill="#efeff3"/><rect x="1129" y="764" width="10" height="10" fill="#ecefed"/><rect x="1159" y="754" width="10" height="10" fill="#e4e7e8"/><rect x="1169" y="754" width="10" height="10" fill="#eff1f8"/><rect x="1159" y="764" width="10" height="10" fill="#e4e2e2"/><rect x="1169" y="764" width="10" height="10" fill="#f1f0f1"/><rect x="1289" y="754" width="10" height="10" fill="#fbf6fa"/><rect x="1289" y="764" width="10" height="10" fill="#f6f8fc"/><rect x="1299" y="754" width="10" height="10" fill="#e1ddde"/><rect x="1299" y="764" width="10" height="10" fill="#ced1d2"/><rect x="1309" y="754" width="10" height="10" fill="#d7dbdc"/><rect x="1309" y="764" width="10" height="10" fill="#c7cbc9"/><rect x="1319" y="754" width="10" height="10" fill="#e3e1e3"/><rect x="1319" y="764" width="10" height="10" fill="#cbccd1"/><rect x="1329" y="754" width="10" height="10" fill="#dedfe6"/><rect x="1329" y="764" width="10" height="10" fill="#ccc9cc"/><rect x="1339" y="754" width="10" height="10" fill="#e5e4e7"/><rect x="1339" y="764" width="10" height="10" fill="#c9c9ce"/><rect x="1349" y="754" width="10" height="10" fill="#fefbfa"/><rect x="1349" y="764" width="10" height="10" fill="#f9f6f4"/><rect x="1419" y="754" width="10" height="10" fill="#f6faf9"/><rect x="1419" y="764" width="10" height="10" fill="#f5f5f5"/><rect x="1429" y="754" width="10" height="10" fill="#d7dbde"/><rect x="1429" y="764" width="10" height="10" fill="#d6d4d6"/><rect x="1439" y="754" width="10" height="10" fill="#e1dedf"/><rect x="1439" y="764" width="10" height="10" fill="#d4d3d0"/><rect x="1449" y="754" width="10" height="10" fill="#e1dfe7"/><rect x="1449" y="764" width="10" height="10" fill="#d0cfcb"/><rect x="1459" y="754" width="10" height="10" fill="#e2e0dd"/><rect x="1459" y="764" width="10" height="10" fill="#dbd7d5"/><rect x="1469" y="754" width="10" height="10" fill="#dbdada"/><rect x="1469" y="764" width="10" height="10" fill="#cdcacd"/><rect x="1479" y="754" width="10" height="10" fill="#fdfafc"/><rect x="1479" y="764" width="10" height="10" fill="#f7f5f8"/><rect x="1639" y="754" width="10" height="10" fill="#e9e8e6"/><rect x="1649" y="754" width="10" height="10" fill="#d9dadd"/><rect x="1639" y="764" width="10" height="10" fill="#d8d4d0"/><rect x="1649" y="764" width="10" height="10" fill="#c5c6cb"/><rect x="150" y="784" width="9" height="10" fill="#efeef2"/><rect x="159" y="784" width="10" height="10" fill="#f0f1f5"/><rect x="150" y="794" width="9" height="10" fill="#f6f6f6"/><rect x="159" y="794" width="10" height="10" fill="#efecee"/><rect x="179" y="784" width="10" height="10" fill="#dedcdc"/><rect x="179" y="794" width="10" height="10" fill="#d6d2d1"/><rect x="189" y="784" width="10" height="10" fill="#dddbda"/><rect x="189" y="794" width="10" height="10" fill="#cfcfd0"/><rect x="199" y="784" width="10" height="10" fill="#d2d5da"/><rect x="199" y="794" width="10" height="10" fill="#c9ccd2"/><rect x="209" y="784" width="10" height="10" fill="#dedddb"/><rect x="209" y="794" width="10" height="10" fill="#d2d1d0"/><rect x="219" y="784" width="10" height="10" fill="#e0e2e2"/><rect x="219" y="794" width="10" height="10" fill="#cbcccf"/><rect x="229" y="784" width="10" height="10" fill="#d3d5d9"/><rect x="229" y="794" width="10" height="10" fill="#cfd0d3"/><rect x="239" y="784" width="10" height="10" fill="#e6e2de"/><rect x="239" y="794" width="10" height="10" fill="#d8d3d0"/><rect x="249" y="784" width="10" height="10" fill="#f1f6fb"/><rect x="249" y="794" width="10" height="10" fill="#eef3f9"/><rect x="399" y="784" width="10" height="10" fill="#e2e2e5"/><rect x="399" y="794" width="10" height="10" fill="#d3d0cf"/><rect x="409" y="784" width="10" height="10" fill="#e7e0e6"/><rect x="409" y="794" width="10" height="10" fill="#d7d5db"/><rect x="419" y="784" width="10" height="10" fill="#e0e1e4"/><rect x="419" y="794" width="10" height="10" fill="#d7d4d7"/><rect x="429" y="784" width="10" height="10" fill="#d9dddd"/><rect x="429" y="794" width="10" height="10" fill="#c8c7c7"/><rect x="439" y="784" width="10" height="10" fill="#e0d9de"/><rect x="439" y="794" width="10" height="10" fill="#cec9cc"/><rect x="449" y="784" width="10" height="10" fill="#e3e6e7"/><rect x="449" y="794" width="10" height="10" fill="#d8d6d6"/><rect x="459" y="784" width="10" height="10" fill="#dcdcdf"/><rect x="459" y="794" width="10" height="10" fill="#cccccd"/><rect x="469" y="784" width="10" height="10" fill="#dfdbdf"/><rect x="469" y="794" width="10" height="10" fill="#cbcccb"/><rect x="489" y="784" width="10" height="10" fill="#f8f6fb"/><rect x="489" y="794" width="10" height="10" fill="#f6f8f8"/><rect x="499" y="784" width="10" height="10" fill="#e6e2e8"/><rect x="499" y="794" width="10" height="10" fill="#d6d9da"/><rect x="509" y="784" width="10" height="10" fill="#e1dce0"/><rect x="509" y="794" width="10" height="10" fill="#d1ced2"/><rect x="519" y="784" width="10" height="10" fill="#dfe3e0"/><rect x="519" y="794" width="10" height="10" fill="#cbcbcd"/><rect x="529" y="784" width="10" height="10" fill="#e7e3e5"/><rect x="529" y="794" width="10" height="10" fill="#cececc"/><rect x="539" y="784" width="10" height="10" fill="#e5e5e7"/><rect x="539" y="794" width="10" height="10" fill="#cbcbd1"/><rect x="549" y="784" width="10" height="10" fill="#e8e5e8"/><rect x="549" y="794" width="10" height="10" fill="#d8d8dd"/><rect x="559" y="784" width="10" height="10" fill="#dededd"/><rect x="559" y="794" width="10" height="10" fill="#d1d2d3"/><rect x="569" y="784" width="10" height="10" fill="#e8e4e6"/><rect x="569" y="794" width="10" height="10" fill="#cfcfd4"/><rect x="579" y="784" width="10" height="10" fill="#e6e8e9"/><rect x="579" y="794" width="10" height="10" fill="#d6d6d8"/><rect x="589" y="784" width="10" height="10" fill="#e4e6e6"/><rect x="589" y="794" width="10" height="10" fill="#d8d8d5"/><rect x="599" y="784" width="10" height="10" fill="#e2dee1"/><rect x="599" y="794" width="10" height="10" fill="#d0d0d7"/><rect x="609" y="784" width="10" height="10" fill="#e7e5e9"/><rect x="609" y="794" width="10" height="10" fill="#cfcfcd"/><rect x="619" y="784" width="10" height="10" fill="#dedfe2"/><rect x="619" y="794" width="10" height="10" fill="#cdccd0"/><rect x="629" y="784" width="10" height="10" fill="#f9f9fd"/><rect x="629" y="794" width="10" height="10" fill="#f4f3f8"/><rect x="939" y="784" width="10" height="10" fill="#d2d4d3"/><rect x="939" y="794" width="10" height="10" fill="#c9c9c6"/><rect x="949" y="784" width="10" height="10" fill="#f0f3f9"/><rect x="949" y="794" width="10" height="10" fill="#f7f5fb"/><rect x="1059" y="784" width="10" height="10" fill="#f6f3f4"/><rect x="1069" y="784" width="10" height="10" fill="#d6d7d8"/><rect x="1079" y="784" width="10" height="10" fill="#e6e5e2"/><rect x="1059" y="794" width="10" height="10" fill="#f6f2f7"/><rect x="1069" y="794" width="10" height="10" fill="#cbcccc"/><rect x="1079" y="794" width="10" height="10" fill="#dfdde0"/><rect x="1129" y="784" width="10" height="10" fill="#eef1f3"/><rect x="1129" y="794" width="10" height="10" fill="#ededf1"/><rect x="1159" y="784" width="10" height="10" fill="#e3e6e6"/><rect x="1169" y="784" width="10" height="10" fill="#f1f1f7"/><rect x="1159" y="794" width="10" height="10" fill="#e5e0e3"/><rect x="1169" y="794" width="10" height="10" fill="#edeff1"/><rect x="1289" y="784" width="10" height="10" fill="#f9f9f9"/><rect x="1289" y="794" width="10" height="10" fill="#f8f7fb"/><rect x="1299" y="784" width="10" height="10" fill="#e6e3ea"/><rect x="1299" y="794" width="10" height="10" fill="#d4d4d4"/><rect x="1309" y="784" width="10" height="10" fill="#dad8dc"/><rect x="1309" y="794" width="10" height="10" fill="#cfcdce"/><rect x="1319" y="784" width="10" height="10" fill="#e3e3e4"/><rect x="1319" y="794" width="10" height="10" fill="#d3d0d5"/><rect x="1329" y="784" width="10" height="10" fill="#e1dde1"/><rect x="1329" y="794" width="10" height="10" fill="#d0d1d6"/><rect x="1339" y="784" width="10" height="10" fill="#dcd8da"/><rect x="1339" y="794" width="10" height="10" fill="#d5d5d2"/><rect x="1349" y="784" width="10" height="10" fill="#faf9fb"/><rect x="1349" y="794" width="10" height="10" fill="#f3f4f5"/><rect x="1419" y="784" width="10" height="10" fill="#f9f9fa"/><rect x="1419" y="794" width="10" height="10" fill="#f5f4fd"/><rect x="1429" y="784" width="10" height="10" fill="#e6e5e6"/><rect x="1429" y="794" width="10" height="10" fill="#cbccd2"/><rect x="1439" y="784" width="10" height="10" fill="#e4e3e7"/><rect x="1439" y="794" width="10" height="10" fill="#dbd5da"/><rect x="1449" y="784" width="10" height="10" fill="#e0e1e6"/><rect x="1449" y="794" width="10" height="10" fill="#cfcdcf"/><rect x="1459" y="784" width="10" height="10" fill="#dbd9d8"/><rect x="1459" y="794" width="10" height="10" fill="#d7d5d6"/><rect x="1469" y="784" width="10" height="10" fill="#e5dee3"/><rect x="1469" y="794" width="10" height="10" fill="#cecfd3"/><rect x="1479" y="784" width="10" height="10" fill="#fbf9ff"/><rect x="1479" y="794" width="10" height="10" fill="#f7f5fb"/><rect x="1639" y="784" width="10" height="10" fill="#e9e8e6"/><rect x="1649" y="784" width="10" height="10" fill="#d9dadd"/><rect x="1639" y="794" width="10" height="10" fill="#d8d4d0"/><rect x="1649" y="794" width="10" height="10" fill="#c5c6cb"/><rect x="150" y="814" width="9" height="10" fill="#f2eef3"/><rect x="159" y="814" width="10" height="10" fill="#f0f1f3"/><rect x="150" y="824" width="9" height="10" fill="#faf7f7"/><rect x="159" y="824" width="10" height="10" fill="#eeeaf1"/><rect x="179" y="814" width="10" height="10" fill="#dedcdc"/><rect x="179" y="824" width="10" height="10" fill="#d6d2d1"/><rect x="189" y="814" width="10" height="10" fill="#dddbda"/><rect x="189" y="824" width="10" height="10" fill="#cfcfd0"/><rect x="199" y="814" width="10" height="10" fill="#d2d5da"/><rect x="199" y="824" width="10" height="10" fill="#c9ccd2"/><rect x="209" y="814" width="10" height="10" fill="#dedddb"/><rect x="209" y="824" width="10" height="10" fill="#d2d1d0"/><rect x="219" y="814" width="10" height="10" fill="#e0e2e2"/><rect x="219" y="824" width="10" height="10" fill="#cbcccf"/><rect x="229" y="814" width="10" height="10" fill="#d3d5d9"/><rect x="229" y="824" width="10" height="10" fill="#cfd0d3"/><rect x="239" y="814" width="10" height="10" fill="#e6e2de"/><rect x="239" y="824" width="10" height="10" fill="#d8d3d0"/><rect x="249" y="814" width="10" height="10" fill="#f1f6fb"/><rect x="249" y="824" width="10" height="10" fill="#eef3f9"/><rect x="399" y="814" width="10" height="10" fill="#dcdee0"/><rect x="399" y="824" width="10" height="10" fill="#d5d7dd"/><rect x="409" y="814" width="10" height="10" fill="#e8e5e7"/><rect x="409" y="824" width="10" height="10" fill="#cecdd2"/><rect x="419" y="814" width="10" height="10" fill="#e4e6e8"/><rect x="419" y="824" width="10" height="10" fill="#d8d4dc"/><rect x="429" y="814" width="10" height="10" fill="#e4e0e5"/><rect x="429" y="824" width="10" height="10" fill="#d2d2d4"/><rect x="439" y="814" width="10" height="10" fill="#e3e3e4"/><rect x="439" y="824" width="10" height="10" fill="#d4d0d2"/><rect x="449" y="814" width="10" height="10" fill="#e2dbdc"/><rect x="449" y="824" width="10" height="10" fill="#d2d3d2"/><rect x="459" y="814" width="10" height="10" fill="#e5e6e6"/><rect x="459" y="824" width="10" height="10" fill="#cdccd0"/><rect x="469" y="814" width="10" height="10" fill="#e0dee2"/><rect x="469" y="824" width="10" height="10" fill="#d6d3da"/><rect x="489" y="814" width="10" height="10" fill="#f9f7f6"/><rect x="489" y="824" width="10" height="10" fill="#f9f7fc"/><rect x="499" y="814" width="10" height="10" fill="#e2dfe2"/><rect x="499" y="824" width="10" height="10" fill="#d2d2d4"/><rect x="509" y="814" width="10" height="10" fill="#e0e1e0"/><rect x="509" y="824" width="10" height="10" fill="#cfcfcf"/><rect x="519" y="814" width="10" height="10" fill="#e3e2e4"/><rect x="519" y="824" width="10" height="10" fill="#dad8d7"/><rect x="529" y="814" width="10" height="10" fill="#e7e6ea"/><rect x="529" y="824" width="10" height="10" fill="#d4d1d4"/><rect x="539" y="814" width="10" height="10" fill="#e8e9eb"/><rect x="539" y="824" width="10" height="10" fill="#d0cacd"/><rect x="549" y="814" width="10" height="10" fill="#dfe0e8"/><rect x="549" y="824" width="10" height="10" fill="#cecad0"/><rect x="559" y="814" width="10" height="10" fill="#e8e7e4"/><rect x="559" y="824" width="10" height="10" fill="#d8d5d6"/><rect x="569" y="814" width="10" height="10" fill="#e1dfe4"/><rect x="569" y="824" width="10" height="10" fill="#cccdd5"/><rect x="579" y="814" width="10" height="10" fill="#e0dbe0"/><rect x="579" y="824" width="10" height="10" fill="#d1d3d7"/><rect x="589" y="814" width="10" height="10" fill="#e0e2df"/><rect x="589" y="824" width="10" height="10" fill="#d6d9da"/><rect x="599" y="814" width="10" height="10" fill="#e8e9ec"/><rect x="599" y="824" width="10" height="10" fill="#d2d5d9"/><rect x="609" y="814" width="10" height="10" fill="#e1e4e8"/><rect x="609" y="824" width="10" height="10" fill="#d7d1d3"/><rect x="619" y="814" width="10" height="10" fill="#e1e4e5"/><rect x="619" y="824" width="10" height="10" fill="#d6d1d7"/><rect x="629" y="814" width="10" height="10" fill="#e2dbe1"/><rect x="629" y="824" width="10" height="10" fill="#cac9cd"/><rect x="639" y="814" width="10" height="10" fill="#e7e6e3"/><rect x="639" y="824" width="10" height="10" fill="#cecac9"/><rect x="649" y="814" width="10" height="10" fill="#fef8fc"/><rect x="649" y="824" width="10" height="10" fill="#f5f7fb"/><rect x="939" y="814" width="10" height="10" fill="#d5d5d7"/><rect x="939" y="824" width="10" height="10" fill="#c8c6cb"/><rect x="949" y="814" width="10" height="10" fill="#f0f0f3"/><rect x="949" y="824" width="10" height="10" fill="#f4f8f7"/><rect x="1059" y="814" width="10" height="10" fill="#f4f3f3"/><rect x="1069" y="814" width="10" height="10" fill="#dbdad7"/><rect x="1079" y="814" width="10" height="10" fill="#e5e6e2"/><rect x="1059" y="824" width="10" height="10" fill="#f3f3f5"/><rect x="1069" y="824" width="10" height="10" fill="#cdcbcb"/><rect x="1079" y="824" width="10" height="10" fill="#dfdbdb"/><rect x="1129" y="814" width="10" height="10" fill="#edeff2"/><rect x="1129" y="824" width="10" height="10" fill="#edefef"/><rect x="1159" y="814" width="10" height="10" fill="#e6e6e5"/><rect x="1169" y="814" width="10" height="10" fill="#f3f1f4"/><rect x="1159" y="824" width="10" height="10" fill="#e2e0e4"/><rect x="1169" y="824" width="10" height="10" fill="#f1f0ee"/><rect x="1289" y="814" width="10" height="10" fill="#f7faff"/><rect x="1289" y="824" width="10" height="10" fill="#f8f7f5"/><rect x="1299" y="814" width="10" height="10" fill="#e2e1e3"/><rect x="1299" y="824" width="10" height="10" fill="#d0cfd5"/><rect x="1309" y="814" width="10" height="10" fill="#d9dad8"/><rect x="1309" y="824" width="10" height="10" fill="#ceced2"/><rect x="1319" y="814" width="10" height="10" fill="#dcdbdf"/><rect x="1319" y="824" width="10" height="10" fill="#dad6d5"/><rect x="1329" y="814" width="10" height="10" fill="#e5e2e5"/><rect x="1329" y="824" width="10" height="10" fill="#c9c9ca"/><rect x="1339" y="814" width="10" height="10" fill="#e5e3e5"/><rect x="1339" y="824" width="10" height="10" fill="#c9cbd0"/><rect x="1349" y="814" width="10" height="10" fill="#fafbf7"/><rect x="1349" y="824" width="10" height="10" fill="#f7f3f4"/><rect x="1419" y="814" width="10" height="10" fill="#fafaf8"/><rect x="1419" y="824" width="10" height="10" fill="#f8f8f5"/><rect x="1429" y="814" width="10" height="10" fill="#dadbe3"/><rect x="1429" y="824" width="10" height="10" fill="#ceccce"/><rect x="1439" y="814" width="10" height="10" fill="#e4e1e1"/><rect x="1439" y="824" width="10" height="10" fill="#cfced5"/><rect x="1449" y="814" width="10" height="10" fill="#ddd8d9"/><rect x="1449" y="824" width="10" height="10" fill="#d0ccce"/><rect x="1459" y="814" width="10" height="10" fill="#dddbdb"/><rect x="1459" y="824" width="10" height="10" fill="#d3d2d6"/><rect x="1469" y="814" width="10" height="10" fill="#e2e3e0"/><rect x="1469" y="824" width="10" height="10" fill="#cececb"/><rect x="1479" y="814" width="10" height="10" fill="#f9f8fb"/><rect x="1479" y="824" width="10" height="10" fill="#f3f3f3"/><rect x="1639" y="814" width="10" height="10" fill="#e9e8e6"/><rect x="1649" y="814" width="10" height="10" fill="#d9dadd"/><rect x="1639" y="824" width="10" height="10" fill="#d8d4d0"/><rect x="1649" y="824" width="10" height="10" fill="#c5c6cb"/><rect x="150" y="844" width="9" height="10" fill="#eef2f0"/><rect x="159" y="844" width="10" height="10" fill="#f5f3f6"/><rect x="150" y="854" width="9" height="10" fill="#f5f9fa"/><rect x="159" y="854" width="10" height="10" fill="#edeaf2"/><rect x="179" y="844" width="10" height="10" fill="#dedcdc"/><rect x="179" y="854" width="10" height="10" fill="#d6d2d1"/><rect x="189" y="844" width="10" height="10" fill="#dddbda"/><rect x="189" y="854" width="10" height="10" fill="#cfcfd0"/><rect x="199" y="844" width="10" height="10" fill="#d2d5da"/><rect x="199" y="854" width="10" height="10" fill="#c9ccd2"/><rect x="209" y="844" width="10" height="10" fill="#dedddb"/><rect x="209" y="854" width="10" height="10" fill="#d2d1d0"/><rect x="219" y="844" width="10" height="10" fill="#e0e2e2"/><rect x="219" y="854" width="10" height="10" fill="#cbcccf"/><rect x="229" y="844" width="10" height="10" fill="#d3d5d9"/><rect x="229" y="854" width="10" height="10" fill="#cfd0d3"/><rect x="239" y="844" width="10" height="10" fill="#e6e2de"/><rect x="239" y="854" width="10" height="10" fill="#d8d3d0"/><rect x="249" y="844" width="10" height="10" fill="#f1f6fb"/><rect x="249" y="854" width="10" height="10" fill="#eef3f9"/><rect x="399" y="844" width="10" height="10" fill="#dedbdf"/><rect x="399" y="854" width="10" height="10" fill="#d0cfd1"/><rect x="409" y="844" width="10" height="10" fill="#dddce3"/><rect x="409" y="854" width="10" height="10" fill="#cfced3"/><rect x="419" y="844" width="10" height="10" fill="#e0dee0"/><rect x="419" y="854" width="10" height="10" fill="#cecac7"/><rect x="429" y="844" width="10" height="10" fill="#dadbdf"/><rect x="429" y="854" width="10" height="10" fill="#cdcdcd"/><rect x="439" y="844" width="10" height="10" fill="#e2e3e2"/><rect x="439" y="854" width="10" height="10" fill="#d5d6d3"/><rect x="449" y="844" width="10" height="10" fill="#dfe1df"/><rect x="449" y="854" width="10" height="10" fill="#d3ced4"/><rect x="459" y="844" width="10" height="10" fill="#dddddf"/><rect x="459" y="854" width="10" height="10" fill="#d7d4d9"/><rect x="469" y="844" width="10" height="10" fill="#e0e0e3"/><rect x="469" y="854" width="10" height="10" fill="#cac9cb"/><rect x="489" y="844" width="10" height="10" fill="#f7f8f7"/><rect x="489" y="854" width="10" height="10" fill="#f6f5f9"/><rect x="499" y="844" width="10" height="10" fill="#e5e3e7"/><rect x="499" y="854" width="10" height="10" fill="#d4d2d2"/><rect x="509" y="844" width="10" height="10" fill="#dfdde1"/><rect x="509" y="854" width="10" height="10" fill="#cfd0d0"/><rect x="519" y="844" width="10" height="10" fill="#e0e1e4"/><rect x="519" y="854" width="10" height="10" fill="#d5d1d7"/><rect x="529" y="844" width="10" height="10" fill="#e2e4e8"/><rect x="529" y="854" width="10" height="10" fill="#d8d9db"/><rect x="539" y="844" width="10" height="10" fill="#e1e0e4"/><rect x="539" y="854" width="10" height="10" fill="#ccced0"/><rect x="549" y="844" width="10" height="10" fill="#e9e7e9"/><rect x="549" y="854" width="10" height="10" fill="#ccc9d2"/><rect x="559" y="844" width="10" height="10" fill="#e5e6e6"/><rect x="559" y="854" width="10" height="10" fill="#cecfd1"/><rect x="569" y="844" width="10" height="10" fill="#e1dee5"/><rect x="569" y="854" width="10" height="10" fill="#cccfce"/><rect x="579" y="844" width="10" height="10" fill="#e1dedd"/><rect x="579" y="854" width="10" height="10" fill="#d3d6da"/><rect x="589" y="844" width="10" height="10" fill="#e9e7e9"/><rect x="589" y="854" width="10" height="10" fill="#d5d9db"/><rect x="599" y="844" width="10" height="10" fill="#dddde1"/><rect x="599" y="854" width="10" height="10" fill="#d6d1d1"/><rect x="609" y="844" width="10" height="10" fill="#e2e3e2"/><rect x="609" y="854" width="10" height="10" fill="#d9d7d8"/><rect x="619" y="844" width="10" height="10" fill="#e1e1e3"/><rect x="619" y="854" width="10" height="10" fill="#d6d8da"/><rect x="629" y="844" width="10" height="10" fill="#e5e4ec"/><rect x="629" y="854" width="10" height="10" fill="#cfcdce"/><rect x="639" y="844" width="10" height="10" fill="#e0dee1"/><rect x="639" y="854" width="10" height="10" fill="#cfd1d3"/><rect x="649" y="844" width="10" height="10" fill="#f8f7fb"/><rect x="649" y="854" width="10" height="10" fill="#f6f4f3"/><rect x="939" y="844" width="10" height="10" fill="#d4d4d6"/><rect x="939" y="854" width="10" height="10" fill="#c6c6c6"/><rect x="949" y="844" width="10" height="10" fill="#f5f1f5"/><rect x="949" y="854" width="10" height="10" fill="#f4f8fc"/><rect x="1059" y="844" width="10" height="10" fill="#f5f4f5"/><rect x="1069" y="844" width="10" height="10" fill="#d7d9d6"/><rect x="1079" y="844" width="10" height="10" fill="#e4e2e7"/><rect x="1059" y="854" width="10" height="10" fill="#f2f1f3"/><rect x="1069" y="854" width="10" height="10" fill="#c8cbcb"/><rect x="1079" y="854" width="10" height="10" fill="#dedee0"/><rect x="1129" y="844" width="10" height="10" fill="#efeded"/><rect x="1129" y="854" width="10" height="10" fill="#ecefed"/><rect x="1159" y="844" width="10" height="10" fill="#e7e7e4"/><rect x="1169" y="844" width="10" height="10" fill="#f0f0f7"/><rect x="1159" y="854" width="10" height="10" fill="#e4e3e5"/><rect x="1169" y="854" width="10" height="10" fill="#efedf2"/><rect x="1289" y="844" width="10" height="10" fill="#fbf9fa"/><rect x="1289" y="854" width="10" height="10" fill="#faf4f7"/><rect x="1299" y="844" width="10" height="10" fill="#d9dad8"/><rect x="1299" y="854" width="10" height="10" fill="#d8d6d9"/><rect x="1309" y="844" width="10" height="10" fill="#e3e4e0"/><rect x="1309" y="854" width="10" height="10" fill="#d7d4d8"/><rect x="1319" y="844" width="10" height="10" fill="#e1dcde"/><rect x="1319" y="854" width="10" height="10" fill="#cecbcd"/><rect x="1329" y="844" width="10" height="10" fill="#e0dce0"/><rect x="1329" y="854" width="10" height="10" fill="#d0d0d6"/><rect x="1339" y="844" width="10" height="10" fill="#dedee7"/><rect x="1339" y="854" width="10" height="10" fill="#d7d3d6"/><rect x="1349" y="844" width="10" height="10" fill="#fdf7fb"/><rect x="1349" y="854" width="10" height="10" fill="#f5f3fa"/><rect x="1419" y="844" width="10" height="10" fill="#f6f8f9"/><rect x="1419" y="854" width="10" height="10" fill="#f6f5f4"/><rect x="1429" y="844" width="10" height="10" fill="#dbd7da"/><rect x="1429" y="854" width="10" height="10" fill="#d6d1d3"/><rect x="1439" y="844" width="10" height="10" fill="#dadbdf"/><rect x="1439" y="854" width="10" height="10" fill="#d1d0d4"/><rect x="1449" y="844" width="10" height="10" fill="#dcdbdc"/><rect x="1449" y="854" width="10" height="10" fill="#d8d3d7"/><rect x="1459" y="844" width="10" height="10" fill="#e4dfe0"/><rect x="1459" y="854" width="10" height="10" fill="#cececd"/><rect x="1469" y="844" width="10" height="10" fill="#dedfe0"/><rect x="1469" y="854" width="10" height="10" fill="#d5d8db"/><rect x="1479" y="844" width="10" height="10" fill="#f7f9f8"/><rect x="1479" y="854" width="10" height="10" fill="#f5f7f8"/><rect x="1639" y="844" width="10" height="10" fill="#e9e8e6"/><rect x="1649" y="844" width="10" height="10" fill="#d9dadd"/><rect x="1639" y="854" width="10" height="10" fill="#d8d4d0"/><rect x="1649" y="854" width="10" height="10" fill="#c5c6cb"/><rect x="150" y="874" width="9" height="10" fill="#f1f0f0"/><rect x="159" y="874" width="10" height="10" fill="#f1f2f3"/><rect x="150" y="884" width="9" height="10" fill="#f5f6f9"/><rect x="159" y="884" width="10" height="10" fill="#eaeef3"/><rect x="179" y="874" width="10" height="10" fill="#dedcdc"/><rect x="179" y="884" width="10" height="10" fill="#d6d2d1"/><rect x="189" y="874" width="10" height="10" fill="#dddbda"/><rect x="189" y="884" width="10" height="10" fill="#cfcfd0"/><rect x="199" y="874" width="10" height="10" fill="#d2d5da"/><rect x="199" y="884" width="10" height="10" fill="#c9ccd2"/><rect x="209" y="874" width="10" height="10" fill="#dedddb"/><rect x="209" y="884" width="10" height="10" fill="#d2d1d0"/><rect x="219" y="874" width="10" height="10" fill="#e0e2e2"/><rect x="219" y="884" width="10" height="10" fill="#cbcccf"/><rect x="229" y="874" width="10" height="10" fill="#d3d5d9"/><rect x="229" y="884" width="10" height="10" fill="#cfd0d3"/><rect x="239" y="874" width="10" height="10" fill="#e6e2de"/><rect x="239" y="884" width="10" height="10" fill="#d8d3d0"/><rect x="249" y="874" width="10" height="10" fill="#f1f6fb"/><rect x="249" y="884" width="10" height="10" fill="#eef3f9"/><rect x="399" y="874" width="10" height="10" fill="#e0e2e1"/><rect x="399" y="884" width="10" height="10" fill="#d0ced2"/><rect x="409" y="874" width="10" height="10" fill="#dfdfde"/><rect x="409" y="884" width="10" height="10" fill="#d5d2d6"/><rect x="419" y="874" width="10" height="10" fill="#e0e0dc"/><rect x="419" y="884" width="10" height="10" fill="#d7d3d2"/><rect x="429" y="874" width="10" height="10" fill="#eae4e6"/><rect x="429" y="884" width="10" height="10" fill="#d2d5db"/><rect x="439" y="874" width="10" height="10" fill="#e4e4e8"/><rect x="439" y="884" width="10" height="10" fill="#d3d2d9"/><rect x="449" y="874" width="10" height="10" fill="#e5e5ea"/><rect x="449" y="884" width="10" height="10" fill="#d2d2d2"/><rect x="459" y="874" width="10" height="10" fill="#e4e2e1"/><rect x="459" y="884" width="10" height="10" fill="#d1cdd3"/><rect x="469" y="874" width="10" height="10" fill="#e2e1e4"/><rect x="469" y="884" width="10" height="10" fill="#ced0d1"/><rect x="489" y="874" width="10" height="10" fill="#f6f8fb"/><rect x="489" y="884" width="10" height="10" fill="#f7f6f5"/><rect x="499" y="874" width="10" height="10" fill="#e1e3e8"/><rect x="499" y="884" width="10" height="10" fill="#cbcdcf"/><rect x="509" y="874" width="10" height="10" fill="#e4e3e5"/><rect x="509" y="884" width="10" height="10" fill="#d8d4d4"/><rect x="519" y="874" width="10" height="10" fill="#e6e4e8"/><rect x="519" y="884" width="10" height="10" fill="#d3ced5"/><rect x="529" y="874" width="10" height="10" fill="#e0e2e1"/><rect x="529" y="884" width="10" height="10" fill="#d0cecb"/><rect x="539" y="874" width="10" height="10" fill="#e1e1e4"/><rect x="539" y="884" width="10" height="10" fill="#d5d1d4"/><rect x="549" y="874" width="10" height="10" fill="#e4e5e8"/><rect x="549" y="884" width="10" height="10" fill="#d4d6d8"/><rect x="559" y="874" width="10" height="10" fill="#e1dfe3"/><rect x="559" y="884" width="10" height="10" fill="#cfcbce"/><rect x="569" y="874" width="10" height="10" fill="#e2e3e0"/><rect x="569" y="884" width="10" height="10" fill="#d7d6db"/><rect x="579" y="874" width="10" height="10" fill="#e6e8ec"/><rect x="579" y="884" width="10" height="10" fill="#d9d2d7"/><rect x="589" y="874" width="10" height="10" fill="#e3e5e4"/><rect x="589" y="884" width="10" height="10" fill="#ccc9cd"/><rect x="599" y="874" width="10" height="10" fill="#dcdce1"/><rect x="599" y="884" width="10" height="10" fill="#d9d5d9"/><rect x="609" y="874" width="10" height="10" fill="#e8e9e6"/><rect x="609" y="884" width="10" height="10" fill="#d5d1d2"/><rect x="619" y="874" width="10" height="10" fill="#dfdddd"/><rect x="619" y="884" width="10" height="10" fill="#d2d5d7"/><rect x="629" y="874" width="10" height="10" fill="#e2e2e7"/><rect x="629" y="884" width="10" height="10" fill="#d6d3d7"/><rect x="639" y="874" width="10" height="10" fill="#dfdee0"/><rect x="639" y="884" width="10" height="10" fill="#d0d2ce"/><rect x="649" y="874" width="10" height="10" fill="#e4e3e0"/><rect x="649" y="884" width="10" height="10" fill="#cdcfd3"/><rect x="659" y="874" width="10" height="10" fill="#dfdcdf"/><rect x="659" y="884" width="10" height="10" fill="#d0d1d7"/><rect x="669" y="874" width="10" height="10" fill="#e0dfe3"/><rect x="669" y="884" width="10" height="10" fill="#d2d1ce"/><rect x="679" y="874" width="10" height="10" fill="#e3e2df"/><rect x="679" y="884" width="10" height="10" fill="#d5d6d8"/><rect x="689" y="874" width="10" height="10" fill="#e2e3e6"/><rect x="689" y="884" width="10" height="10" fill="#cccac9"/><rect x="699" y="874" width="10" height="10" fill="#fbf7f9"/><rect x="699" y="884" width="10" height="10" fill="#f8f5f6"/><rect x="939" y="874" width="10" height="10" fill="#d7d2d2"/><rect x="939" y="884" width="10" height="10" fill="#c9c8ca"/><rect x="949" y="874" width="10" height="10" fill="#f1f3f4"/><rect x="949" y="884" width="10" height="10" fill="#f7f6f9"/><rect x="1059" y="874" width="10" height="10" fill="#f2f4f1"/><rect x="1069" y="874" width="10" height="10" fill="#d8d6d8"/><rect x="1079" y="874" width="10" height="10" fill="#e3e3e7"/><rect x="1059" y="884" width="10" height="10" fill="#f2f1f2"/><rect x="1069" y="884" width="10" height="10" fill="#caccce"/><rect x="1079" y="884" width="10" height="10" fill="#dbdedd"/><rect x="1129" y="874" width="10" height="10" fill="#f0eeee"/><rect x="1129" y="884" width="10" height="10" fill="#eeeeed"/><rect x="1159" y="874" width="10" height="10" fill="#e8e6e6"/><rect x="1169" y="874" width="10" height="10" fill="#f4f3f3"/><rect x="1159" y="884" width="10" height="10" fill="#e2e3e4"/><rect x="1169" y="884" width="10" height="10" fill="#ededf2"/><rect x="1289" y="874" width="10" height="10" fill="#fbf8fd"/><rect x="1289" y="884" width="10" height="10" fill="#f8f6f8"/><rect x="1299" y="874" width="10" height="10" fill="#e0dbdb"/><rect x="1299" y="884" width="10" height="10" fill="#d2d1d0"/><rect x="1309" y="874" width="10" height="10" fill="#e4e2df"/><rect x="1309" y="884" width="10" height="10" fill="#dbd8d5"/><rect x="1319" y="874" width="10" height="10" fill="#e0dbe0"/><rect x="1319" y="884" width="10" height="10" fill="#c8c9cb"/><rect x="1329" y="874" width="10" height="10" fill="#e5e3ea"/><rect x="1329" y="884" width="10" height="10" fill="#ccc9c8"/><rect x="1339" y="874" width="10" height="10" fill="#dddce4"/><rect x="1339" y="884" width="10" height="10" fill="#cdcaca"/><rect x="1349" y="874" width="10" height="10" fill="#fcf8f9"/><rect x="1349" y="884" width="10" height="10" fill="#f3f5fb"/><rect x="1419" y="874" width="10" height="10" fill="#f9f6fb"/><rect x="1419" y="884" width="10" height="10" fill="#fbf7f5"/><rect x="1429" y="874" width="10" height="10" fill="#dfdedf"/><rect x="1429" y="884" width="10" height="10" fill="#ced0d4"/><rect x="1439" y="874" width="10" height="10" fill="#dcddda"/><rect x="1439" y="884" width="10" height="10" fill="#d5d5d3"/><rect x="1449" y="874" width="10" height="10" fill="#e0dbdf"/><rect x="1449" y="884" width="10" height="10" fill="#cecacd"/><rect x="1459" y="874" width="10" height="10" fill="#dfdedc"/><rect x="1459" y="884" width="10" height="10" fill="#d5d4d2"/><rect x="1469" y="874" width="10" height="10" fill="#dbd7dd"/><rect x="1469" y="884" width="10" height="10" fill="#cec8c9"/><rect x="1479" y="874" width="10" height="10" fill="#f9f8ff"/><rect x="1479" y="884" width="10" height="10" fill="#f8f3f6"/><rect x="1619" y="884" width="10" height="10" fill="#faf8fa"/><rect x="1629" y="874" width="10" height="10" fill="#e0ddde"/><rect x="1629" y="884" width="10" height="10" fill="#d1cdd2"/><rect x="1639" y="874" width="10" height="10" fill="#e9e8e6"/><rect x="1649" y="874" width="10" height="10" fill="#d9dadd"/><rect x="1639" y="884" width="10" height="10" fill="#d8d4d0"/><rect x="1649" y="884" width="10" height="10" fill="#c5c6cb"/><rect x="150" y="904" width="9" height="10" fill="#f1f1f0"/><rect x="159" y="904" width="10" height="10" fill="#f5f4f8"/><rect x="150" y="914" width="9" height="10" fill="#faf8f9"/><rect x="159" y="914" width="10" height="10" fill="#eaebf0"/><rect x="179" y="904" width="10" height="10" fill="#dedcdc"/><rect x="179" y="914" width="10" height="10" fill="#d6d2d1"/><rect x="189" y="904" width="10" height="10" fill="#dddbda"/><rect x="189" y="914" width="10" height="10" fill="#cfcfd0"/><rect x="199" y="904" width="10" height="10" fill="#d2d5da"/><rect x="199" y="914" width="10" height="10" fill="#c9ccd2"/><rect x="209" y="904" width="10" height="10" fill="#dedddb"/><rect x="209" y="914" width="10" height="10" fill="#d2d1d0"/><rect x="219" y="904" width="10" height="10" fill="#e0e2e2"/><rect x="219" y="914" width="10" height="10" fill="#cbcccf"/><rect x="229" y="904" width="10" height="10" fill="#d3d5d9"/><rect x="229" y="914" width="10" height="10" fill="#cfd0d3"/><rect x="239" y="904" width="10" height="10" fill="#e6e2de"/><rect x="239" y="914" width="10" height="10" fill="#d8d3d0"/><rect x="249" y="904" width="10" height="10" fill="#f1f6fb"/><rect x="249" y="914" width="10" height="10" fill="#eef3f9"/><rect x="399" y="904" width="10" height="10" fill="#e6e4e6"/><rect x="399" y="914" width="10" height="10" fill="#d5d1d0"/><rect x="409" y="904" width="10" height="10" fill="#e4e5e3"/><rect x="409" y="914" width="10" height="10" fill="#c9cace"/><rect x="419" y="904" width="10" height="10" fill="#dfe0e2"/><rect x="419" y="914" width="10" height="10" fill="#d2d0d5"/><rect x="429" y="904" width="10" height="10" fill="#e3e0e4"/><rect x="429" y="914" width="10" height="10" fill="#cfcbcf"/><rect x="439" y="904" width="10" height="10" fill="#dfdfe2"/><rect x="439" y="914" width="10" height="10" fill="#d5d4d7"/><rect x="449" y="904" width="10" height="10" fill="#dbdbde"/><rect x="449" y="914" width="10" height="10" fill="#d2d0cf"/><rect x="459" y="904" width="10" height="10" fill="#e0dedd"/><rect x="459" y="914" width="10" height="10" fill="#c9c9cb"/><rect x="469" y="904" width="10" height="10" fill="#dddadb"/><rect x="469" y="914" width="10" height="10" fill="#d5d5d6"/><rect x="489" y="904" width="10" height="10" fill="#faf6f9"/><rect x="489" y="914" width="10" height="10" fill="#f7f7f7"/><rect x="499" y="904" width="10" height="10" fill="#e4e0e5"/><rect x="499" y="914" width="10" height="10" fill="#d7d7d5"/><rect x="509" y="904" width="10" height="10" fill="#e5e3eb"/><rect x="509" y="914" width="10" height="10" fill="#d3d2d3"/><rect x="519" y="904" width="10" height="10" fill="#eae6e5"/><rect x="519" y="914" width="10" height="10" fill="#d9d4d7"/><rect x="529" y="904" width="10" height="10" fill="#e3e3e5"/><rect x="529" y="914" width="10" height="10" fill="#dcd7d6"/><rect x="539" y="904" width="10" height="10" fill="#e3e2e0"/><rect x="539" y="914" width="10" height="10" fill="#d8d6d5"/><rect x="549" y="904" width="10" height="10" fill="#e4e2e1"/><rect x="549" y="914" width="10" height="10" fill="#cbcbd2"/><rect x="559" y="904" width="10" height="10" fill="#eae5e6"/><rect x="559" y="914" width="10" height="10" fill="#d9d9db"/><rect x="569" y="904" width="10" height="10" fill="#e3ddde"/><rect x="569" y="914" width="10" height="10" fill="#d0cece"/><rect x="579" y="904" width="10" height="10" fill="#e2e2e8"/><rect x="579" y="914" width="10" height="10" fill="#d6d4d4"/><rect x="589" y="904" width="10" height="10" fill="#e4e4e6"/><rect x="589" y="914" width="10" height="10" fill="#cbc9d1"/><rect x="599" y="904" width="10" height="10" fill="#e0dddb"/><rect x="599" y="914" width="10" height="10" fill="#d1d2d6"/><rect x="609" y="904" width="10" height="10" fill="#dde0e3"/><rect x="609" y="914" width="10" height="10" fill="#d6d1d3"/><rect x="619" y="904" width="10" height="10" fill="#e2e0e5"/><rect x="619" y="914" width="10" height="10" fill="#d3d4d5"/><rect x="629" y="904" width="10" height="10" fill="#fdf7fd"/><rect x="629" y="914" width="10" height="10" fill="#f8f5fa"/><rect x="939" y="904" width="10" height="10" fill="#d7d4d6"/><rect x="939" y="914" width="10" height="10" fill="#cac9c8"/><rect x="949" y="904" width="10" height="10" fill="#f3f1f5"/><rect x="949" y="914" width="10" height="10" fill="#f6f8fc"/><rect x="1059" y="904" width="10" height="10" fill="#f1f2f2"/><rect x="1069" y="904" width="10" height="10" fill="#dbd9db"/><rect x="1079" y="904" width="10" height="10" fill="#e2e3e7"/><rect x="1059" y="914" width="10" height="10" fill="#f5f3f5"/><rect x="1069" y="914" width="10" height="10" fill="#cccbca"/><rect x="1079" y="914" width="10" height="10" fill="#dedbde"/><rect x="1129" y="904" width="10" height="10" fill="#f0f0ef"/><rect x="1129" y="914" width="10" height="10" fill="#eceded"/><rect x="1159" y="904" width="10" height="10" fill="#e4e7e8"/><rect x="1169" y="904" width="10" height="10" fill="#eff0f8"/><rect x="1159" y="914" width="10" height="10" fill="#e2e0e1"/><rect x="1169" y="914" width="10" height="10" fill="#f0eef1"/><rect x="1289" y="904" width="10" height="10" fill="#fbf7fa"/><rect x="1289" y="914" width="10" height="10" fill="#fbf4f9"/><rect x="1299" y="904" width="10" height="10" fill="#e1e2e4"/><rect x="1299" y="914" width="10" height="10" fill="#d3d1d9"/><rect x="1309" y="904" width="10" height="10" fill="#e6dfe4"/><rect x="1309" y="914" width="10" height="10" fill="#d5cfd2"/><rect x="1319" y="904" width="10" height="10" fill="#e4e2e5"/><rect x="1319" y="914" width="10" height="10" fill="#cdcecf"/><rect x="1329" y="904" width="10" height="10" fill="#e1e0e2"/><rect x="1329" y="914" width="10" height="10" fill="#c7cbcb"/><rect x="1339" y="904" width="10" height="10" fill="#e3dfe4"/><rect x="1339" y="914" width="10" height="10" fill="#cfccd2"/><rect x="1349" y="904" width="10" height="10" fill="#f8f9fc"/><rect x="1349" y="914" width="10" height="10" fill="#f8f3f9"/><rect x="1419" y="904" width="10" height="10" fill="#f8fafe"/><rect x="1419" y="914" width="10" height="10" fill="#f8f7f4"/><rect x="1429" y="904" width="10" height="10" fill="#e2e4e5"/><rect x="1429" y="914" width="10" height="10" fill="#ceccd1"/><rect x="1439" y="904" width="10" height="10" fill="#dbddda"/><rect x="1439" y="914" width="10" height="10" fill="#d0cbd1"/><rect x="1449" y="904" width="10" height="10" fill="#d7d9db"/><rect x="1449" y="914" width="10" height="10" fill="#d2d0d7"/><rect x="1459" y="904" width="10" height="10" fill="#e2e5e3"/><rect x="1459" y="914" width="10" height="10" fill="#d8d3d4"/><rect x="1469" y="904" width="10" height="10" fill="#d8dadb"/><rect x="1469" y="914" width="10" height="10" fill="#c7c7c7"/><rect x="1479" y="904" width="10" height="10" fill="#fefbfa"/><rect x="1479" y="914" width="10" height="10" fill="#f4f6f6"/><rect x="1639" y="904" width="10" height="10" fill="#e9e8e6"/><rect x="1649" y="904" width="10" height="10" fill="#d9dadd"/><rect x="1639" y="914" width="10" height="10" fill="#d8d4d0"/><rect x="1649" y="914" width="10" height="10" fill="#c5c6cb"/><rect x="150" y="934" width="9" height="10" fill="#eff2f2"/><rect x="159" y="934" width="10" height="10" fill="#f0f2f5"/><rect x="150" y="944" width="9" height="10" fill="#f9f6f7"/><rect x="159" y="944" width="10" height="10" fill="#ebeef1"/><rect x="179" y="934" width="10" height="10" fill="#dedcdc"/><rect x="179" y="944" width="10" height="10" fill="#d6d2d1"/><rect x="189" y="934" width="10" height="10" fill="#dddbda"/><rect x="189" y="944" width="10" height="10" fill="#cfcfd0"/><rect x="199" y="934" width="10" height="10" fill="#d2d5da"/><rect x="199" y="944" width="10" height="10" fill="#c9ccd2"/><rect x="209" y="934" width="10" height="10" fill="#dedddb"/><rect x="209" y="944" width="10" height="10" fill="#d2d1d0"/><rect x="219" y="934" width="10" height="10" fill="#e0e2e2"/><rect x="219" y="944" width="10" height="10" fill="#cbcccf"/><rect x="229" y="934" width="10" height="10" fill="#d3d5d9"/><rect x="229" y="944" width="10" height="10" fill="#cfd0d3"/><rect x="239" y="934" width="10" height="10" fill="#e6e2de"/><rect x="239" y="944" width="10" height="10" fill="#d8d3d0"/><rect x="249" y="934" width="10" height="10" fill="#f1f6fb"/><rect x="249" y="944" width="10" height="10" fill="#eef3f9"/><rect x="399" y="934" width="10" height="10" fill="#dbdcde"/><rect x="399" y="944" width="10" height="10" fill="#cfcdcc"/><rect x="409" y="934" width="10" height="10" fill="#e2e1e0"/><rect x="409" y="944" width="10" height="10" fill="#c7c8cd"/><rect x="419" y="934" width="10" height="10" fill="#e5e3e4"/><rect x="419" y="944" width="10" height="10" fill="#c9c7cb"/><rect x="429" y="934" width="10" height="10" fill="#e3e1e1"/><rect x="429" y="944" width="10" height="10" fill="#d1ccd3"/><rect x="439" y="934" width="10" height="10" fill="#dddee2"/><rect x="439" y="944" width="10" height="10" fill="#d6d6dd"/><rect x="449" y="934" width="10" height="10" fill="#e1dce1"/><rect x="449" y="944" width="10" height="10" fill="#d9d6d8"/><rect x="459" y="934" width="10" height="10" fill="#e7e6e5"/><rect x="459" y="944" width="10" height="10" fill="#cfccd2"/><rect x="469" y="934" width="10" height="10" fill="#e2e0df"/><rect x="469" y="944" width="10" height="10" fill="#d5d4d7"/><rect x="489" y="934" width="10" height="10" fill="#fbf9f9"/><rect x="489" y="944" width="10" height="10" fill="#f8f6f5"/><rect x="499" y="934" width="10" height="10" fill="#e6e6e9"/><rect x="499" y="944" width="10" height="10" fill="#d0cecf"/><rect x="509" y="934" width="10" height="10" fill="#e4e0e7"/><rect x="509" y="944" width="10" height="10" fill="#cccecf"/><rect x="519" y="934" width="10" height="10" fill="#e7e2e8"/><rect x="519" y="944" width="10" height="10" fill="#d0cfd0"/><rect x="529" y="934" width="10" height="10" fill="#e0e1e3"/><rect x="529" y="944" width="10" height="10" fill="#d3d2d1"/><rect x="539" y="934" width="10" height="10" fill="#e5e3ea"/><rect x="539" y="944" width="10" height="10" fill="#d7d0d1"/><rect x="549" y="934" width="10" height="10" fill="#dfe2e1"/><rect x="549" y="944" width="10" height="10" fill="#d4d8d9"/><rect x="559" y="934" width="10" height="10" fill="#dfe1e5"/><rect x="559" y="944" width="10" height="10" fill="#cecbcc"/><rect x="569" y="934" width="10" height="10" fill="#e3dee3"/><rect x="569" y="944" width="10" height="10" fill="#d1d2d3"/><rect x="579" y="934" width="10" height="10" fill="#e3e0e3"/><rect x="579" y="944" width="10" height="10" fill="#d1cdd1"/><rect x="589" y="934" width="10" height="10" fill="#e4e5e8"/><rect x="589" y="944" width="10" height="10" fill="#d2d4d9"/><rect x="599" y="934" width="10" height="10" fill="#e8e9ed"/><rect x="599" y="944" width="10" height="10" fill="#d2cfce"/><rect x="609" y="934" width="10" height="10" fill="#dcdfe4"/><rect x="609" y="944" width="10" height="10" fill="#cdcdd1"/><rect x="619" y="934" width="10" height="10" fill="#e6e4e1"/><rect x="619" y="944" width="10" height="10" fill="#d7d5d3"/><rect x="629" y="934" width="10" height="10" fill="#e2e1e4"/><rect x="629" y="944" width="10" height="10" fill="#d9d6dc"/><rect x="639" y="934" width="10" height="10" fill="#e7e5e5"/><rect x="639" y="944" width="10" height="10" fill="#dad6d5"/><rect x="649" y="934" width="10" height="10" fill="#e4dfe4"/><rect x="649" y="944" width="10" height="10" fill="#cacacc"/><rect x="659" y="934" width="10" height="10" fill="#dfdcdc"/><rect x="659" y="944" width="10" height="10" fill="#cfcacd"/><rect x="669" y="934" width="10" height="10" fill="#e1dede"/><rect x="669" y="944" width="10" height="10" fill="#d0d1cd"/><rect x="679" y="934" width="10" height="10" fill="#e3e3e6"/><rect x="679" y="944" width="10" height="10" fill="#d6d7db"/><rect x="689" y="934" width="10" height="10" fill="#e3e1e4"/><rect x="689" y="944" width="10" height="10" fill="#d7d0d0"/><rect x="699" y="934" width="10" height="10" fill="#e9e5e6"/><rect x="699" y="944" width="10" height="10" fill="#d4d2d2"/><rect x="709" y="934" width="10" height="10" fill="#e5e7e8"/><rect x="709" y="944" width="10" height="10" fill="#d8d6d4"/><rect x="719" y="934" width="10" height="10" fill="#f9faff"/><rect x="719" y="944" width="10" height="10" fill="#f5f6f4"/><rect x="939" y="934" width="10" height="10" fill="#d6d3d5"/><rect x="939" y="944" width="10" height="10" fill="#c8c7cc"/><rect x="949" y="934" width="10" height="10" fill="#f2f2f3"/><rect x="949" y="944" width="10" height="10" fill="#f6f4fa"/><rect x="1059" y="934" width="10" height="10" fill="#f2f2f3"/><rect x="1069" y="934" width="10" height="10" fill="#dbdada"/><rect x="1079" y="934" width="10" height="10" fill="#e5e3e6"/><rect x="1059" y="944" width="10" height="10" fill="#f1f2f7"/><rect x="1069" y="944" width="10" height="10" fill="#cdcac8"/><rect x="1079" y="944" width="10" height="10" fill="#dddbdd"/><rect x="1129" y="934" width="10" height="10" fill="#eeeff2"/><rect x="1129" y="944" width="10" height="10" fill="#ececed"/><rect x="1159" y="934" width="10" height="10" fill="#e3e4e5"/><rect x="1169" y="934" width="10" height="10" fill="#f0f3f7"/><rect x="1159" y="944" width="10" height="10" fill="#e2e0e6"/><rect x="1169" y="944" width="10" height="10" fill="#edeff1"/><rect x="1289" y="934" width="10" height="10" fill="#f8f9f8"/><rect x="1289" y="944" width="10" height="10" fill="#f8f5f8"/><rect x="1299" y="934" width="10" height="10" fill="#e1e2e8"/><rect x="1299" y="944" width="10" height="10" fill="#d5d6d5"/><rect x="1309" y="934" width="10" height="10" fill="#d8dadb"/><rect x="1309" y="944" width="10" height="10" fill="#d2d5d6"/><rect x="1319" y="934" width="10" height="10" fill="#e0e0e7"/><rect x="1319" y="944" width="10" height="10" fill="#d0d1d1"/><rect x="1329" y="934" width="10" height="10" fill="#dbd8da"/><rect x="1329" y="944" width="10" height="10" fill="#d0cfd4"/><rect x="1339" y="934" width="10" height="10" fill="#dbd9d9"/><rect x="1339" y="944" width="10" height="10" fill="#cbc7cd"/><rect x="1349" y="934" width="10" height="10" fill="#f7f9fc"/><rect x="1349" y="944" width="10" height="10" fill="#f8f6fa"/><rect x="1419" y="934" width="10" height="10" fill="#fbf9fc"/><rect x="1419" y="944" width="10" height="10" fill="#fbf6f7"/><rect x="1429" y="934" width="10" height="10" fill="#e2e0de"/><rect x="1429" y="944" width="10" height="10" fill="#cfcfd2"/><rect x="1439" y="934" width="10" height="10" fill="#dadde0"/><rect x="1439" y="944" width="10" height="10" fill="#d6d5d6"/><rect x="1449" y="934" width="10" height="10" fill="#e2dde0"/><rect x="1449" y="944" width="10" height="10" fill="#cccacd"/><rect x="1459" y="934" width="10" height="10" fill="#e6e2e3"/><rect x="1459" y="944" width="10" height="10" fill="#d0cfd0"/><rect x="1469" y="934" width="10" height="10" fill="#dedadb"/><rect x="1469" y="944" width="10" height="10" fill="#d2d2d1"/><rect x="1479" y="934" width="10" height="10" fill="#fefaf9"/><rect x="1479" y="944" width="10" height="10" fill="#f5f6f7"/><rect x="1639" y="934" width="10" height="10" fill="#e9e8e6"/><rect x="1649" y="934" width="10" height="10" fill="#d9dadd"/><rect x="1639" y="944" width="10" height="10" fill="#d8d4d0"/><rect x="1649" y="944" width="10" height="10" fill="#c5c6cb"/><rect x="150" y="964" width="9" height="10" fill="#f0f2f3"/><rect x="159" y="964" width="10" height="10" fill="#f5f2f3"/><rect x="150" y="974" width="9" height="10" fill="#faf9fa"/><rect x="159" y="974" width="10" height="10" fill="#ebeef3"/><rect x="179" y="964" width="10" height="10" fill="#dedcdc"/><rect x="179" y="974" width="10" height="10" fill="#d6d2d1"/><rect x="189" y="964" width="10" height="10" fill="#dddbda"/><rect x="189" y="974" width="10" height="10" fill="#cfcfd0"/><rect x="199" y="964" width="10" height="10" fill="#d2d5da"/><rect x="199" y="974" width="10" height="10" fill="#c9ccd2"/><rect x="209" y="964" width="10" height="10" fill="#dedddb"/><rect x="209" y="974" width="10" height="10" fill="#d2d1d0"/><rect x="219" y="964" width="10" height="10" fill="#e0e2e2"/><rect x="219" y="974" width="10" height="10" fill="#cbcccf"/><rect x="229" y="964" width="10" height="10" fill="#d3d5d9"/><rect x="229" y="974" width="10" height="10" fill="#cfd0d3"/><rect x="239" y="964" width="10" height="10" fill="#e6e2de"/><rect x="239" y="974" width="10" height="10" fill="#d8d3d0"/><rect x="249" y="964" width="10" height="10" fill="#f1f6fb"/><rect x="249" y="974" width="10" height="10" fill="#eef3f9"/><rect x="399" y="964" width="10" height="10" fill="#e2dfe1"/><rect x="399" y="974" width="10" height="10" fill="#d0cfcc"/><rect x="409" y="964" width="10" height="10" fill="#dfdfdc"/><rect x="409" y="974" width="10" height="10" fill="#cbcac9"/><rect x="419" y="964" width="10" height="10" fill="#e8e6e7"/><rect x="419" y="974" width="10" height="10" fill="#d0c9cb"/><rect x="429" y="964" width="10" height="10" fill="#dfe2e0"/><rect x="429" y="974" width="10" height="10" fill="#d0cfcc"/><rect x="439" y="964" width="10" height="10" fill="#e4e2e0"/><rect x="439" y="974" width="10" height="10" fill="#d1ccce"/><rect x="449" y="964" width="10" height="10" fill="#e4dfe2"/><rect x="449" y="974" width="10" height="10" fill="#d0ccd1"/><rect x="459" y="964" width="10" height="10" fill="#e6e2e6"/><rect x="459" y="974" width="10" height="10" fill="#cdcacd"/><rect x="469" y="964" width="10" height="10" fill="#e1e0de"/><rect x="469" y="974" width="10" height="10" fill="#d2cfd3"/><rect x="489" y="964" width="10" height="10" fill="#f9f8fb"/><rect x="489" y="974" width="10" height="10" fill="#f8f6f6"/><rect x="499" y="964" width="10" height="10" fill="#dee2e3"/><rect x="499" y="974" width="10" height="10" fill="#cdcece"/><rect x="509" y="964" width="10" height="10" fill="#e5e3e1"/><rect x="509" y="974" width="10" height="10" fill="#dad8d7"/><rect x="519" y="964" width="10" height="10" fill="#dedee0"/><rect x="519" y="974" width="10" height="10" fill="#d8d6d5"/><rect x="529" y="964" width="10" height="10" fill="#e4e5e2"/><rect x="529" y="974" width="10" height="10" fill="#dcd8d6"/><rect x="539" y="964" width="10" height="10" fill="#e5e5eb"/><rect x="539" y="974" width="10" height="10" fill="#cfcfd0"/><rect x="549" y="964" width="10" height="10" fill="#e3e1e5"/><rect x="549" y="974" width="10" height="10" fill="#d5d3d5"/><rect x="559" y="964" width="10" height="10" fill="#e2e1e4"/><rect x="559" y="974" width="10" height="10" fill="#d2d0d3"/><rect x="569" y="964" width="10" height="10" fill="#e0dce1"/><rect x="569" y="974" width="10" height="10" fill="#d5d5d7"/><rect x="579" y="964" width="10" height="10" fill="#e3e0e0"/><rect x="579" y="974" width="10" height="10" fill="#d5d9de"/><rect x="589" y="964" width="10" height="10" fill="#dbdcdf"/><rect x="589" y="974" width="10" height="10" fill="#cacbcf"/><rect x="599" y="964" width="10" height="10" fill="#e4e3e9"/><rect x="599" y="974" width="10" height="10" fill="#d3d3d6"/><rect x="609" y="964" width="10" height="10" fill="#dedddd"/><rect x="609" y="974" width="10" height="10" fill="#dad6da"/><rect x="619" y="964" width="10" height="10" fill="#e7e3e5"/><rect x="619" y="974" width="10" height="10" fill="#cfcfd1"/><rect x="629" y="964" width="10" height="10" fill="#e6e1e3"/><rect x="629" y="974" width="10" height="10" fill="#d2d4d7"/><rect x="639" y="964" width="10" height="10" fill="#e5e3e2"/><rect x="639" y="974" width="10" height="10" fill="#d6d7dd"/><rect x="649" y="964" width="10" height="10" fill="#eae8ea"/><rect x="649" y="974" width="10" height="10" fill="#d1d0d4"/><rect x="659" y="964" width="10" height="10" fill="#e5e4e5"/><rect x="659" y="974" width="10" height="10" fill="#d1cecf"/><rect x="669" y="964" width="10" height="10" fill="#e7e5e3"/><rect x="669" y="974" width="10" height="10" fill="#cbcdcc"/><rect x="679" y="964" width="10" height="10" fill="#e2e2e4"/><rect x="679" y="974" width="10" height="10" fill="#d9d7d5"/><rect x="689" y="964" width="10" height="10" fill="#e1dee1"/><rect x="689" y="974" width="10" height="10" fill="#c9cdcf"/><rect x="699" y="964" width="10" height="10" fill="#e3dee0"/><rect x="699" y="974" width="10" height="10" fill="#cecbd2"/><rect x="709" y="964" width="10" height="10" fill="#dfdfe5"/><rect x="709" y="974" width="10" height="10" fill="#d4d1d5"/><rect x="719" y="964" width="10" height="10" fill="#f8f9fc"/><rect x="719" y="974" width="10" height="10" fill="#f8f6f4"/><rect x="939" y="964" width="10" height="10" fill="#d2d3d2"/><rect x="939" y="974" width="10" height="10" fill="#c7c9c8"/><rect x="949" y="964" width="10" height="10" fill="#f1f4f9"/><rect x="949" y="974" width="10" height="10" fill="#f6f8fc"/><rect x="1059" y="964" width="10" height="10" fill="#f2f3f3"/><rect x="1069" y="964" width="10" height="10" fill="#d8dadc"/><rect x="1079" y="964" width="10" height="10" fill="#e3e3e8"/><rect x="1059" y="974" width="10" height="10" fill="#f6f2f4"/><rect x="1069" y="974" width="10" height="10" fill="#c8cacb"/><rect x="1079" y="974" width="10" height="10" fill="#dbdcdb"/><rect x="1129" y="964" width="10" height="10" fill="#f2f1f2"/><rect x="1129" y="974" width="10" height="10" fill="#ecedef"/><rect x="1159" y="964" width="10" height="10" fill="#e4e4e6"/><rect x="1169" y="964" width="10" height="10" fill="#f1f2f2"/><rect x="1159" y="974" width="10" height="10" fill="#e0e2e0"/><rect x="1169" y="974" width="10" height="10" fill="#f1edf1"/><rect x="1289" y="964" width="10" height="10" fill="#f8f9fb"/><rect x="1289" y="974" width="10" height="10" fill="#f7f4f8"/><rect x="1299" y="964" width="10" height="10" fill="#e2e2e2"/><rect x="1299" y="974" width="10" height="10" fill="#ccccd1"/><rect x="1309" y="964" width="10" height="10" fill="#dfddde"/><rect x="1309" y="974" width="10" height="10" fill="#d9d3d3"/><rect x="1319" y="964" width="10" height="10" fill="#e1dedf"/><rect x="1319" y="974" width="10" height="10" fill="#ccccd0"/><rect x="1329" y="964" width="10" height="10" fill="#e3e0df"/><rect x="1329" y="974" width="10" height="10" fill="#cccad2"/><rect x="1339" y="964" width="10" height="10" fill="#e4e3e2"/><rect x="1339" y="974" width="10" height="10" fill="#d2d1d4"/><rect x="1349" y="964" width="10" height="10" fill="#fbfbfa"/><rect x="1349" y="974" width="10" height="10" fill="#f8f4f6"/><rect x="1419" y="964" width="10" height="10" fill="#f6f8fb"/><rect x="1419" y="974" width="10" height="10" fill="#fbf5f6"/><rect x="1429" y="964" width="10" height="10" fill="#dbd9e2"/><rect x="1429" y="974" width="10" height="10" fill="#d6d3d2"/><rect x="1439" y="964" width="10" height="10" fill="#dcdbdf"/><rect x="1439" y="974" width="10" height="10" fill="#cacccc"/><rect x="1449" y="964" width="10" height="10" fill="#d9d9dc"/><rect x="1449" y="974" width="10" height="10" fill="#ced0ce"/><rect x="1459" y="964" width="10" height="10" fill="#dfe0dd"/><rect x="1459" y="974" width="10" height="10" fill="#cbced1"/><rect x="1469" y="964" width="10" height="10" fill="#dadae0"/><rect x="1469" y="974" width="10" height="10" fill="#cec9cd"/><rect x="1479" y="964" width="10" height="10" fill="#f8f9fa"/><rect x="1479" y="974" width="10" height="10" fill="#f6f7f7"/><rect x="1639" y="964" width="10" height="10" fill="#e9e8e6"/><rect x="1649" y="964" width="10" height="10" fill="#d9dadd"/><rect x="1639" y="974" width="10" height="10" fill="#d8d4d0"/><rect x="1649" y="974" width="10" height="10" fill="#c5c6cb"/><rect x="150" y="994" width="9" height="10" fill="#eef0f2"/><rect x="159" y="994" width="10" height="10" fill="#f0f0f8"/><rect x="150" y="1004" width="9" height="10" fill="#f9f6f6"/><rect x="159" y="1004" width="10" height="10" fill="#ebeef3"/><rect x="179" y="994" width="10" height="10" fill="#dedcdc"/><rect x="179" y="1004" width="10" height="10" fill="#d6d2d1"/><rect x="189" y="994" width="10" height="10" fill="#dddbda"/><rect x="189" y="1004" width="10" height="10" fill="#cfcfd0"/><rect x="199" y="994" width="10" height="10" fill="#d2d5da"/><rect x="199" y="1004" width="10" height="10" fill="#c9ccd2"/><rect x="209" y="994" width="10" height="10" fill="#dedddb"/><rect x="209" y="1004" width="10" height="10" fill="#d2d1d0"/><rect x="219" y="994" width="10" height="10" fill="#e0e2e2"/><rect x="219" y="1004" width="10" height="10" fill="#cbcccf"/><rect x="229" y="994" width="10" height="10" fill="#d3d5d9"/><rect x="229" y="1004" width="10" height="10" fill="#cfd0d3"/><rect x="239" y="994" width="10" height="10" fill="#e6e2de"/><rect x="239" y="1004" width="10" height="10" fill="#d8d3d0"/><rect x="249" y="994" width="10" height="10" fill="#f1f6fb"/><rect x="249" y="1004" width="10" height="10" fill="#eef3f9"/><rect x="399" y="994" width="10" height="10" fill="#e2e1e8"/><rect x="399" y="1004" width="10" height="10" fill="#d2d2d3"/><rect x="409" y="994" width="10" height="10" fill="#e5e4e4"/><rect x="409" y="1004" width="10" height="10" fill="#d6d7d7"/><rect x="419" y="994" width="10" height="10" fill="#dcd9d9"/><rect x="419" y="1004" width="10" height="10" fill="#cdd0d4"/><rect x="429" y="994" width="10" height="10" fill="#dcdcdc"/><rect x="429" y="1004" width="10" height="10" fill="#cecbd1"/><rect x="439" y="994" width="10" height="10" fill="#daddde"/><rect x="439" y="1004" width="10" height="10" fill="#c7cbcc"/><rect x="449" y="994" width="10" height="10" fill="#dcdce0"/><rect x="449" y="1004" width="10" height="10" fill="#caccce"/><rect x="459" y="994" width="10" height="10" fill="#e0dedc"/><rect x="459" y="1004" width="10" height="10" fill="#d8d5d3"/><rect x="469" y="994" width="10" height="10" fill="#e6e1e3"/><rect x="469" y="1004" width="10" height="10" fill="#d9d8d6"/><rect x="489" y="994" width="10" height="10" fill="#fdf6f6"/><rect x="489" y="1004" width="10" height="10" fill="#f5f5f5"/><rect x="499" y="994" width="10" height="10" fill="#e7e7e8"/><rect x="499" y="1004" width="10" height="10" fill="#d7d0d3"/><rect x="509" y="994" width="10" height="10" fill="#eae7eb"/><rect x="509" y="1004" width="10" height="10" fill="#d8d5d6"/><rect x="519" y="994" width="10" height="10" fill="#eae9eb"/><rect x="519" y="1004" width="10" height="10" fill="#d5d3d5"/><rect x="529" y="994" width="10" height="10" fill="#e2e5e8"/><rect x="529" y="1004" width="10" height="10" fill="#d6d4d5"/><rect x="539" y="994" width="10" height="10" fill="#e0dddf"/><rect x="539" y="1004" width="10" height="10" fill="#d1d2ce"/><rect x="549" y="994" width="10" height="10" fill="#e1e0e7"/><rect x="549" y="1004" width="10" height="10" fill="#d1d2d4"/><rect x="559" y="994" width="10" height="10" fill="#e3dee4"/><rect x="559" y="1004" width="10" height="10" fill="#cdcccf"/><rect x="569" y="994" width="10" height="10" fill="#dedfe6"/><rect x="569" y="1004" width="10" height="10" fill="#d3d0d1"/><rect x="579" y="994" width="10" height="10" fill="#e3e1e3"/><rect x="579" y="1004" width="10" height="10" fill="#d3d1d7"/><rect x="589" y="994" width="10" height="10" fill="#e0e1e6"/><rect x="589" y="1004" width="10" height="10" fill="#cecccf"/><rect x="599" y="994" width="10" height="10" fill="#e2dfdd"/><rect x="599" y="1004" width="10" height="10" fill="#d6d4d1"/><rect x="609" y="994" width="10" height="10" fill="#e6e5e5"/><rect x="609" y="1004" width="10" height="10" fill="#d4d5d6"/><rect x="619" y="994" width="10" height="10" fill="#eae8e7"/><rect x="619" y="1004" width="10" height="10" fill="#cbc9cf"/><rect x="629" y="994" width="10" height="10" fill="#eae8e7"/><rect x="629" y="1004" width="10" height="10" fill="#cdcecf"/><rect x="639" y="994" width="10" height="10" fill="#e5e3e2"/><rect x="639" y="1004" width="10" height="10" fill="#cacacd"/><rect x="649" y="994" width="10" height="10" fill="#e7e5ec"/><rect x="649" y="1004" width="10" height="10" fill="#d8d3d6"/><rect x="659" y="994" width="10" height="10" fill="#e0e1e2"/><rect x="659" y="1004" width="10" height="10" fill="#d2cdd3"/><rect x="669" y="994" width="10" height="10" fill="#e8e7ea"/><rect x="669" y="1004" width="10" height="10" fill="#d5d4d9"/><rect x="679" y="994" width="10" height="10" fill="#e8e6e8"/><rect x="679" y="1004" width="10" height="10" fill="#d4d0d4"/><rect x="689" y="994" width="10" height="10" fill="#e2e1df"/><rect x="689" y="1004" width="10" height="10" fill="#d8d7da"/><rect x="699" y="994" width="10" height="10" fill="#e2e2e6"/><rect x="699" y="1004" width="10" height="10" fill="#d8d6da"/><rect x="709" y="994" width="10" height="10" fill="#e5e3e4"/><rect x="709" y="1004" width="10" height="10" fill="#cdcdcc"/><rect x="719" y="994" width="10" height="10" fill="#fcfbfd"/><rect x="719" y="1004" width="10" height="10" fill="#f8f4f9"/><rect x="939" y="994" width="10" height="10" fill="#d4d2d3"/><rect x="939" y="1004" width="10" height="10" fill="#c8cac9"/><rect x="949" y="994" width="10" height="10" fill="#f5f4f9"/><rect x="949" y="1004" width="10" height="10" fill="#f9f7fd"/><rect x="1059" y="994" width="10" height="10" fill="#f1f3f4"/><rect x="1069" y="994" width="10" height="10" fill="#d8d9da"/><rect x="1079" y="994" width="10" height="10" fill="#e4e2e4"/><rect x="1059" y="1004" width="10" height="10" fill="#f4f1f1"/><rect x="1069" y="1004" width="10" height="10" fill="#ccccca"/><rect x="1079" y="1004" width="10" height="10" fill="#dcdedc"/><rect x="1129" y="994" width="10" height="10" fill="#efeeed"/><rect x="1129" y="1004" width="10" height="10" fill="#f0ecf2"/><rect x="1159" y="994" width="10" height="10" fill="#e7e6e9"/><rect x="1169" y="994" width="10" height="10" fill="#f4eff4"/><rect x="1159" y="1004" width="10" height="10" fill="#e1e1e5"/><rect x="1169" y="1004" width="10" height="10" fill="#f1ecf2"/><rect x="1289" y="994" width="10" height="10" fill="#faf9f9"/><rect x="1289" y="1004" width="10" height="10" fill="#f6f6fa"/><rect x="1299" y="994" width="10" height="10" fill="#dddddf"/><rect x="1299" y="1004" width="10" height="10" fill="#d6d3d3"/><rect x="1309" y="994" width="10" height="10" fill="#dfdce3"/><rect x="1309" y="1004" width="10" height="10" fill="#d5d2d8"/><rect x="1319" y="994" width="10" height="10" fill="#e1dfe6"/><rect x="1319" y="1004" width="10" height="10" fill="#d0cece"/><rect x="1329" y="994" width="10" height="10" fill="#e5e1e6"/><rect x="1329" y="1004" width="10" height="10" fill="#d9d7d9"/><rect x="1339" y="994" width="10" height="10" fill="#e0dcdd"/><rect x="1339" y="1004" width="10" height="10" fill="#d6d1d7"/><rect x="1349" y="994" width="10" height="10" fill="#fbfbf8"/><rect x="1349" y="1004" width="10" height="10" fill="#f5f3f8"/><rect x="1419" y="994" width="10" height="10" fill="#f8f6fe"/><rect x="1419" y="1004" width="10" height="10" fill="#f6f4fa"/><rect x="1429" y="994" width="10" height="10" fill="#dfdde2"/><rect x="1429" y="1004" width="10" height="10" fill="#cecacd"/><rect x="1439" y="994" width="10" height="10" fill="#e2e0e4"/><rect x="1439" y="1004" width="10" height="10" fill="#cfd2d0"/><rect x="1449" y="994" width="10" height="10" fill="#dddfdf"/><rect x="1449" y="1004" width="10" height="10" fill="#d2d5da"/><rect x="1459" y="994" width="10" height="10" fill="#e0dadb"/><rect x="1459" y="1004" width="10" height="10" fill="#cbcfd0"/><rect x="1469" y="994" width="10" height="10" fill="#e2dfe5"/><rect x="1469" y="1004" width="10" height="10" fill="#d0ccd2"/><rect x="1479" y="994" width="10" height="10" fill="#fcf8fc"/><rect x="1479" y="1004" width="10" height="10" fill="#f5f7f8"/><rect x="1639" y="994" width="10" height="10" fill="#e9e8e6"/><rect x="1649" y="994" width="10" height="10" fill="#d9dadd"/><rect x="1639" y="1004" width="10" height="10" fill="#d8d4d0"/><rect x="1649" y="1004" width="10" height="10" fill="#c5c6cb"/><rect x="150" y="1024" width="9" height="10" fill="#f3f0ee"/><rect x="159" y="1024" width="10" height="10" fill="#f5f3f7"/><rect x="150" y="1034" width="9" height="10" fill="#f6f8f8"/><rect x="159" y="1034" width="10" height="10" fill="#efeef0"/><rect x="179" y="1024" width="10" height="10" fill="#dedcdc"/><rect x="179" y="1034" width="10" height="10" fill="#d6d2d1"/><rect x="189" y="1024" width="10" height="10" fill="#dddbda"/><rect x="189" y="1034" width="10" height="10" fill="#cfcfd0"/><rect x="199" y="1024" width="10" height="10" fill="#d2d5da"/><rect x="199" y="1034" width="10" height="10" fill="#c9ccd2"/><rect x="209" y="1024" width="10" height="10" fill="#dedddb"/><rect x="209" y="1034" width="10" height="10" fill="#d2d1d0"/><rect x="219" y="1024" width="10" height="10" fill="#e0e2e2"/><rect x="219" y="1034" width="10" height="10" fill="#cbcccf"/><rect x="229" y="1024" width="10" height="10" fill="#d3d5d9"/><rect x="229" y="1034" width="10" height="10" fill="#cfd0d3"/><rect x="239" y="1024" width="10" height="10" fill="#e6e2de"/><rect x="239" y="1034" width="10" height="10" fill="#d8d3d0"/><rect x="249" y="1024" width="10" height="10" fill="#f1f6fb"/><rect x="249" y="1034" width="10" height="10" fill="#eef3f9"/><rect x="399" y="1024" width="10" height="10" fill="#dfdcdf"/><rect x="399" y="1034" width="10" height="10" fill="#cecdcf"/><rect x="409" y="1024" width="10" height="10" fill="#e2e2e7"/><rect x="409" y="1034" width="10" height="10" fill="#c8cbcd"/><rect x="419" y="1024" width="10" height="10" fill="#e2e1e5"/><rect x="419" y="1034" width="10" height="10" fill="#d2d4d6"/><rect x="429" y="1024" width="10" height="10" fill="#e6e3e1"/><rect x="429" y="1034" width="10" height="10" fill="#cbc8cb"/><rect x="439" y="1024" width="10" height="10" fill="#e5e3e3"/><rect x="439" y="1034" width="10" height="10" fill="#cfcecf"/><rect x="449" y="1024" width="10" height="10" fill="#ded9db"/><rect x="449" y="1034" width="10" height="10" fill="#d4d5dc"/><rect x="459" y="1024" width="10" height="10" fill="#e2e2e6"/><rect x="459" y="1034" width="10" height="10" fill="#ced2d5"/><rect x="469" y="1024" width="10" height="10" fill="#dedfdf"/><rect x="469" y="1034" width="10" height="10" fill="#d1d0d4"/><rect x="489" y="1024" width="10" height="10" fill="#fbf9f7"/><rect x="489" y="1034" width="10" height="10" fill="#f5f5f4"/><rect x="499" y="1024" width="10" height="10" fill="#e2e0df"/><rect x="499" y="1034" width="10" height="10" fill="#ccccd2"/><rect x="509" y="1024" width="10" height="10" fill="#e1dbe1"/><rect x="509" y="1034" width="10" height="10" fill="#ced0d0"/><rect x="519" y="1024" width="10" height="10" fill="#e5e2e3"/><rect x="519" y="1034" width="10" height="10" fill="#d2d3d3"/><rect x="529" y="1024" width="10" height="10" fill="#dddfe2"/><rect x="529" y="1034" width="10" height="10" fill="#d8d5d8"/><rect x="539" y="1024" width="10" height="10" fill="#e3dce2"/><rect x="539" y="1034" width="10" height="10" fill="#d3d5d7"/><rect x="549" y="1024" width="10" height="10" fill="#e8e8ea"/><rect x="549" y="1034" width="10" height="10" fill="#dad7d6"/><rect x="559" y="1024" width="10" height="10" fill="#e2e3e8"/><rect x="559" y="1034" width="10" height="10" fill="#d2d5d9"/><rect x="569" y="1024" width="10" height="10" fill="#e5dedf"/><rect x="569" y="1034" width="10" height="10" fill="#d4d3d6"/><rect x="579" y="1024" width="10" height="10" fill="#e3e3e8"/><rect x="579" y="1034" width="10" height="10" fill="#cbcdce"/><rect x="589" y="1024" width="10" height="10" fill="#e4e5e7"/><rect x="589" y="1034" width="10" height="10" fill="#d2cfd8"/><rect x="599" y="1024" width="10" height="10" fill="#e0dde3"/><rect x="599" y="1034" width="10" height="10" fill="#cfcbcf"/><rect x="609" y="1024" width="10" height="10" fill="#e1e5e9"/><rect x="609" y="1034" width="10" height="10" fill="#cdcdd0"/><rect x="619" y="1024" width="10" height="10" fill="#e6e4e9"/><rect x="619" y="1034" width="10" height="10" fill="#d8d4d5"/><rect x="629" y="1024" width="10" height="10" fill="#e5e2e4"/><rect x="629" y="1034" width="10" height="10" fill="#d7d6d7"/><rect x="639" y="1024" width="10" height="10" fill="#e3dde1"/><rect x="639" y="1034" width="10" height="10" fill="#d4d8d4"/><rect x="649" y="1024" width="10" height="10" fill="#e8e3e3"/><rect x="649" y="1034" width="10" height="10" fill="#d4d1d1"/><rect x="659" y="1024" width="10" height="10" fill="#e2e2e1"/><rect x="659" y="1034" width="10" height="10" fill="#d1d1cf"/><rect x="669" y="1024" width="10" height="10" fill="#dedee1"/><rect x="669" y="1034" width="10" height="10" fill="#d0cdca"/><rect x="679" y="1024" width="10" height="10" fill="#e6e7e7"/><rect x="679" y="1034" width="10" height="10" fill="#d2cfcf"/><rect x="689" y="1024" width="10" height="10" fill="#dddce1"/><rect x="689" y="1034" width="10" height="10" fill="#d4d5d8"/><rect x="699" y="1024" width="10" height="10" fill="#e4e0e1"/><rect x="699" y="1034" width="10" height="10" fill="#d2d0d2"/><rect x="709" y="1024" width="10" height="10" fill="#e4e2e9"/><rect x="709" y="1034" width="10" height="10" fill="#cfced0"/><rect x="719" y="1024" width="10" height="10" fill="#f7fafe"/><rect x="719" y="1034" width="10" height="10" fill="#f5f4fa"/><rect x="939" y="1024" width="10" height="10" fill="#d4d4d2"/><rect x="939" y="1034" width="10" height="10" fill="#c7c8cc"/><rect x="949" y="1024" width="10" height="10" fill="#f0f4f4"/><rect x="949" y="1034" width="10" height="10" fill="#f4f4fd"/><rect x="1059" y="1024" width="10" height="10" fill="#f3f4f6"/><rect x="1069" y="1024" width="10" height="10" fill="#d8d8d6"/><rect x="1079" y="1024" width="10" height="10" fill="#e6e2e5"/><rect x="1059" y="1034" width="10" height="10" fill="#f2f2f5"/><rect x="1069" y="1034" width="10" height="10" fill="#c8ccc9"/><rect x="1079" y="1034" width="10" height="10" fill="#dddedf"/><rect x="1129" y="1024" width="10" height="10" fill="#f2edf2"/><rect x="1129" y="1034" width="10" height="10" fill="#ededee"/><rect x="1159" y="1024" width="10" height="10" fill="#e3e5e6"/><rect x="1169" y="1024" width="10" height="10" fill="#f4eff3"/><rect x="1159" y="1034" width="10" height="10" fill="#e4e3e4"/><rect x="1169" y="1034" width="10" height="10" fill="#f1edf1"/><rect x="1289" y="1024" width="10" height="10" fill="#f7f8f8"/><rect x="1289" y="1034" width="10" height="10" fill="#f4f5fc"/><rect x="1299" y="1024" width="10" height="10" fill="#e2dfdc"/><rect x="1299" y="1034" width="10" height="10" fill="#d2d4d0"/><rect x="1309" y="1024" width="10" height="10" fill="#dddde4"/><rect x="1309" y="1034" width="10" height="10" fill="#cbcdce"/><rect x="1319" y="1024" width="10" height="10" fill="#dedce1"/><rect x="1319" y="1034" width="10" height="10" fill="#d6d1d5"/><rect x="1329" y="1024" width="10" height="10" fill="#e0e0e4"/><rect x="1329" y="1034" width="10" height="10" fill="#cecacc"/><rect x="1339" y="1024" width="10" height="10" fill="#dadade"/><rect x="1339" y="1034" width="10" height="10" fill="#d4d7dd"/><rect x="1349" y="1024" width="10" height="10" fill="#f9f9fc"/><rect x="1349" y="1034" width="10" height="10" fill="#f5f4f3"/><rect x="1419" y="1024" width="10" height="10" fill="#fdfaf8"/><rect x="1419" y="1034" width="10" height="10" fill="#f8f5f4"/><rect x="1429" y="1024" width="10" height="10" fill="#d9dcde"/><rect x="1429" y="1034" width="10" height="10" fill="#d0d2d2"/><rect x="1439" y="1024" width="10" height="10" fill="#dcdadf"/><rect x="1439" y="1034" width="10" height="10" fill="#c9c9ce"/><rect x="1449" y="1024" width="10" height="10" fill="#dedbdb"/><rect x="1449" y="1034" width="10" height="10" fill="#cacdce"/><rect x="1459" y="1024" width="10" height="10" fill="#d9dae1"/><rect x="1459" y="1034" width="10" height="10" fill="#d4d5d9"/><rect x="1469" y="1024" width="10" height="10" fill="#dcdbdf"/><rect x="1469" y="1034" width="10" height="10" fill="#cccaca"/><rect x="1479" y="1024" width="10" height="10" fill="#f9f8f9"/><rect x="1479" y="1034" width="10" height="10" fill="#f6f6f9"/><rect x="1639" y="1024" width="10" height="10" fill="#e9e8e6"/><rect x="1649" y="1024" width="10" height="10" fill="#d9dadd"/><rect x="1639" y="1034" width="10" height="10" fill="#d8d4d0"/><rect x="1649" y="1034" width="10" height="10" fill="#c5c6cb"/><rect x="150" y="1054" width="9" height="10" fill="#eeeef1"/><rect x="159" y="1054" width="10" height="10" fill="#f4f3f3"/><rect x="150" y="1064" width="9" height="9" fill="#f8f5f8"/><rect x="159" y="1064" width="10" height="9" fill="#edebee"/><rect x="179" y="1054" width="10" height="10" fill="#dedcdc"/><rect x="179" y="1064" width="10" height="9" fill="#d6d2d1"/><rect x="189" y="1054" width="10" height="10" fill="#dddbda"/><rect x="189" y="1064" width="10" height="9" fill="#cfcfd0"/><rect x="199" y="1054" width="10" height="10" fill="#d2d5da"/><rect x="199" y="1064" width="10" height="9" fill="#c9ccd2"/><rect x="209" y="1054" width="10" height="10" fill="#dedddb"/><rect x="209" y="1064" width="10" height="9" fill="#d2d1d0"/><rect x="219" y="1054" width="10" height="10" fill="#e0e2e2"/><rect x="219" y="1064" width="10" height="9" fill="#cbcccf"/><rect x="229" y="1054" width="10" height="10" fill="#d3d5d9"/><rect x="229" y="1064" width="10" height="9" fill="#cfd0d3"/><rect x="239" y="1054" width="10" height="10" fill="#e6e2de"/><rect x="239" y="1064" width="10" height="9" fill="#d8d3d0"/><rect x="249" y="1054" width="10" height="10" fill="#f1f6fb"/><rect x="249" y="1064" width="10" height="9" fill="#eef3f9"/><rect x="399" y="1054" width="10" height="10" fill="#dfe0e2"/><rect x="399" y="1064" width="10" height="9" fill="#d0d1d1"/><rect x="409" y="1054" width="10" height="10" fill="#dedce0"/><rect x="409" y="1064" width="10" height="9" fill="#cfcdd3"/><rect x="419" y="1054" width="10" height="10" fill="#e2e2e5"/><rect x="419" y="1064" width="10" height="9" fill="#d6d5d8"/><rect x="429" y="1054" width="10" height="10" fill="#dcdbdb"/><rect x="429" y="1064" width="10" height="9" fill="#d1d2d2"/><rect x="439" y="1054" width="10" height="10" fill="#e0dddb"/><rect x="439" y="1064" width="10" height="9" fill="#cacacb"/><rect x="449" y="1054" width="10" height="10" fill="#dddcdb"/><rect x="449" y="1064" width="10" height="9" fill="#d4d6d2"/><rect x="459" y="1054" width="10" height="10" fill="#eae3e7"/><rect x="459" y="1064" width="10" height="9" fill="#d1d1d3"/><rect x="469" y="1054" width="10" height="10" fill="#e6e3e5"/><rect x="469" y="1064" width="10" height="9" fill="#cec9cf"/><rect x="489" y="1054" width="10" height="10" fill="#f9f7f6"/><rect x="489" y="1064" width="10" height="9" fill="#f9f4f7"/><rect x="499" y="1054" width="10" height="10" fill="#e0e1e2"/><rect x="499" y="1064" width="10" height="9" fill="#d8d8dd"/><rect x="509" y="1054" width="10" height="10" fill="#dedfde"/><rect x="509" y="1064" width="10" height="9" fill="#cdcbca"/><rect x="519" y="1054" width="10" height="10" fill="#e9e5e7"/><rect x="519" y="1064" width="10" height="9" fill="#d2cfd2"/><rect x="529" y="1054" width="10" height="10" fill="#e5e4e3"/><rect x="529" y="1064" width="10" height="9" fill="#cccfcd"/><rect x="539" y="1054" width="10" height="10" fill="#e7e0e4"/><rect x="539" y="1064" width="10" height="9" fill="#d0d0d5"/><rect x="549" y="1054" width="10" height="10" fill="#dfdfde"/><rect x="549" y="1064" width="10" height="9" fill="#cfcfd0"/><rect x="559" y="1054" width="10" height="10" fill="#e2e5e1"/><rect x="559" y="1064" width="10" height="9" fill="#cecccc"/><rect x="569" y="1054" width="10" height="10" fill="#e7e3e4"/><rect x="569" y="1064" width="10" height="9" fill="#ceccce"/><rect x="579" y="1054" width="10" height="10" fill="#e7e6e8"/><rect x="579" y="1064" width="10" height="9" fill="#d9d7db"/><rect x="589" y="1054" width="10" height="10" fill="#dfdfe2"/><rect x="589" y="1064" width="10" height="9" fill="#d4d6d7"/><rect x="599" y="1054" width="10" height="10" fill="#e0e2e2"/><rect x="599" y="1064" width="10" height="9" fill="#dad7db"/><rect x="609" y="1054" width="10" height="10" fill="#ebe9e5"/><rect x="609" y="1064" width="10" height="9" fill="#d4d6d8"/><rect x="619" y="1054" width="10" height="10" fill="#e7e7e7"/><rect x="619" y="1064" width="10" height="9" fill="#d5d2d9"/><rect x="629" y="1054" width="10" height="10" fill="#e0e1e4"/><rect x="629" y="1064" width="10" height="9" fill="#d5d4d9"/><rect x="639" y="1054" width="10" height="10" fill="#e4dfe6"/><rect x="639" y="1064" width="10" height="9" fill="#d8d4d8"/><rect x="649" y="1054" width="10" height="10" fill="#e3e3e5"/><rect x="649" y="1064" width="10" height="9" fill="#dcd6d8"/><rect x="659" y="1054" width="10" height="10" fill="#e3e0e4"/><rect x="659" y="1064" width="10" height="9" fill="#dad8d6"/><rect x="669" y="1054" width="10" height="10" fill="#e5e0e1"/><rect x="669" y="1064" width="10" height="9" fill="#d3d0cf"/><rect x="679" y="1054" width="10" height="10" fill="#e0dee1"/><rect x="679" y="1064" width="10" height="9" fill="#d6d6d7"/><rect x="689" y="1054" width="10" height="10" fill="#e4e5e7"/><rect x="689" y="1064" width="10" height="9" fill="#d7d7d5"/><rect x="699" y="1054" width="10" height="10" fill="#e2e1e6"/><rect x="699" y="1064" width="10" height="9" fill="#d9d4d9"/><rect x="709" y="1054" width="10" height="10" fill="#e8e7e8"/><rect x="709" y="1064" width="10" height="9" fill="#d9d9da"/><rect x="719" y="1054" width="10" height="10" fill="#fcfbff"/><rect x="719" y="1064" width="10" height="9" fill="#f5f5fb"/><rect x="939" y="1054" width="10" height="10" fill="#d4d3d8"/><rect x="939" y="1064" width="10" height="9" fill="#c6cac9"/><rect x="949" y="1054" width="10" height="10" fill="#f5f4f3"/><rect x="949" y="1064" width="10" height="9" fill="#f5f4fb"/><rect x="1059" y="1054" width="10" height="10" fill="#f5f4f6"/><rect x="1069" y="1054" width="10" height="10" fill="#dad8d6"/><rect x="1079" y="1054" width="10" height="10" fill="#e2e2e8"/><rect x="1059" y="1064" width="10" height="9" fill="#f2f1f6"/><rect x="1069" y="1064" width="10" height="9" fill="#c9c8c9"/><rect x="1079" y="1064" width="10" height="9" fill="#dbdbdc"/><rect x="1129" y="1054" width="10" height="10" fill="#f2eeed"/><rect x="1129" y="1064" width="10" height="9" fill="#ececec"/><rect x="1159" y="1054" width="10" height="10" fill="#e3e4e4"/><rect x="1169" y="1054" width="10" height="10" fill="#f2f1f2"/><rect x="1159" y="1064" width="10" height="9" fill="#e4e2e2"/><rect x="1169" y="1064" width="10" height="9" fill="#eeeff1"/><rect x="1289" y="1054" width="10" height="10" fill="#f8f6f6"/><rect x="1289" y="1064" width="10" height="9" fill="#f5f6f4"/><rect x="1299" y="1054" width="10" height="10" fill="#dddadc"/><rect x="1299" y="1064" width="10" height="9" fill="#d4d2d4"/><rect x="1309" y="1054" width="10" height="10" fill="#e2e2e7"/><rect x="1309" y="1064" width="10" height="9" fill="#cacccf"/><rect x="1319" y="1054" width="10" height="10" fill="#dcdde4"/><rect x="1319" y="1064" width="10" height="9" fill="#d5d2d5"/><rect x="1329" y="1054" width="10" height="10" fill="#e5e3e9"/><rect x="1329" y="1064" width="10" height="9" fill="#cacdc9"/><rect x="1339" y="1054" width="10" height="10" fill="#e6e2e1"/><rect x="1339" y="1064" width="10" height="9" fill="#d2cfd1"/><rect x="1349" y="1054" width="10" height="10" fill="#f9fbfd"/><rect x="1349" y="1064" width="10" height="9" fill="#f9f5f8"/><rect x="1419" y="1054" width="10" height="10" fill="#fbf6fa"/><rect x="1419" y="1064" width="10" height="9" fill="#f8f5f9"/><rect x="1429" y="1054" width="10" height="10" fill="#dfdfe3"/><rect x="1429" y="1064" width="10" height="9" fill="#d4d1d1"/><rect x="1439" y="1054" width="10" height="10" fill="#d9d9da"/><rect x="1439" y="1064" width="10" height="9" fill="#ceccca"/><rect x="1449" y="1054" width="10" height="10" fill="#e2e0e5"/><rect x="1449" y="1064" width="10" height="9" fill="#cfcdcd"/><rect x="1459" y="1054" width="10" height="10" fill="#e1e2e3"/><rect x="1459" y="1064" width="10" height="9" fill="#ceced3"/><rect x="1469" y="1054" width="10" height="10" fill="#e1e0de"/><rect x="1469" y="1064" width="10" height="9" fill="#d1d1d8"/><rect x="1479" y="1054" width="10" height="10" fill="#f7f9fd"/><rect x="1479" y="1064" width="10" height="9" fill="#f9f4f6"/><rect x="1639" y="1054" width="10" height="10" fill="#e9e8e6"/><rect x="1649" y="1054" width="10" height="10" fill="#d9dadd"/><rect x="1639" y="1064" width="10" height="9" fill="#d8d4d0"/><rect x="1649" y="1064" width="10" height="9" fill="#c5c6cb"/></svg>
<div id="frame"></div>
</body></html>
